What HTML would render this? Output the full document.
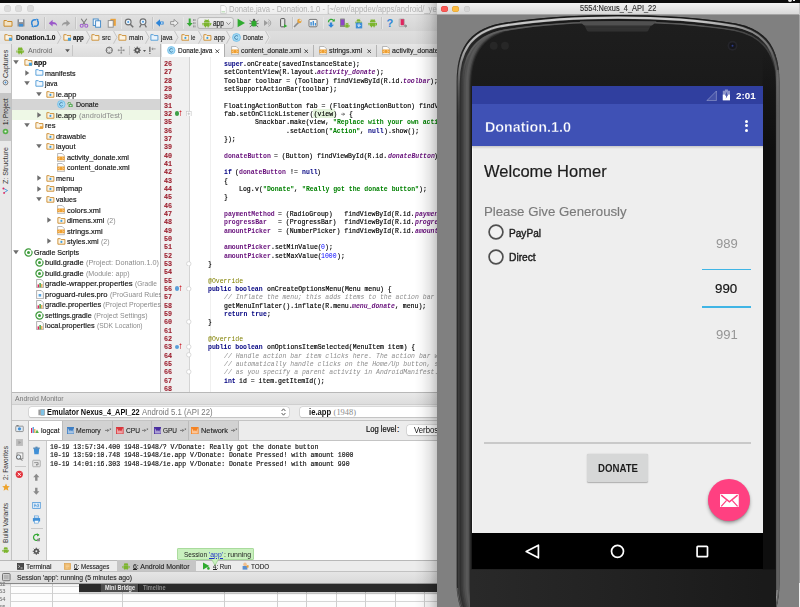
<!DOCTYPE html><html><head><meta charset="utf-8"><title>Donation</title><style>

html,body{margin:0;padding:0;background:#fff;}
#r{position:relative;width:800px;height:607px;overflow:hidden;background:#fff;font-family:"Liberation Sans",sans-serif;}
#r div,#r span,#r svg{position:absolute;}
#r .t{white-space:pre;transform-origin:0 50%;}
#r .c{position:static;}

</style></head><body><div id="r">
<div style="left:0px;top:0px;width:800px;height:607px;background:#fff;"></div>
<div style="left:0px;top:0px;width:800px;height:3px;background:#0c0c0c;"></div>
<div style="left:0px;top:3px;width:437px;height:11.6px;background:linear-gradient(#f7f7f7,#ececec);"></div>
<div style="left:4.0px;top:5.3px;width:7px;height:7px;border-radius:50%;background:#dcdcdc;box-shadow:inset 0 0 0 0.5px #cfcfcf"></div>
<div style="left:15.25px;top:5.3px;width:7px;height:7px;border-radius:50%;background:#dcdcdc;box-shadow:inset 0 0 0 0.5px #cfcfcf"></div>
<div style="left:26.5px;top:5.3px;width:7px;height:7px;border-radius:50%;background:#dcdcdc;box-shadow:inset 0 0 0 0.5px #cfcfcf"></div>
<svg style="left:219.5px;top:4.5px;" width="7" height="9" viewBox="0 0 7 9"><path d="M0.7,0.5h3.6l2,2v6h-5.6z" fill="#fafafa" stroke="#c4c4c4" stroke-width="0.7"/><path d="M1.5,6.8h3.5" stroke="#b5d8b0" stroke-width="1.2"/></svg>
<span class="t" style="left:229.40px;top:4.00px;font-size:8.7px;line-height:10.44px;color:#b2b2b2;transform:scaleX(0.884);">Donate.java - Donation.1.0 - [~/env/appdev/apps/android/_yea</span>
<div style="left:0px;top:14.6px;width:437px;height:16.4px;background:linear-gradient(#e0e0e0,#d5d5d5);"></div>
<div style="left:0px;top:14.4px;width:437px;height:0.6px;background:#cfcfcf;"></div>
<div style="left:0px;top:30.5px;width:437px;height:0.7px;background:#b9b9b9;"></div>
<div style="left:44px;top:17px;width:0.7px;height:12px;background:#c6c6c6;"></div>
<div style="left:44.7px;top:17px;width:0.6px;height:12px;background:#e6e6e6;"></div>
<div style="left:75.4px;top:17px;width:0.7px;height:12px;background:#c6c6c6;"></div>
<div style="left:76.10000000000001px;top:17px;width:0.6px;height:12px;background:#e6e6e6;"></div>
<div style="left:120.6px;top:17px;width:0.7px;height:12px;background:#c6c6c6;"></div>
<div style="left:121.3px;top:17px;width:0.6px;height:12px;background:#e6e6e6;"></div>
<div style="left:151.9px;top:17px;width:0.7px;height:12px;background:#c6c6c6;"></div>
<div style="left:152.6px;top:17px;width:0.6px;height:12px;background:#e6e6e6;"></div>
<div style="left:182.5px;top:17px;width:0.7px;height:12px;background:#c6c6c6;"></div>
<div style="left:183.2px;top:17px;width:0.6px;height:12px;background:#e6e6e6;"></div>
<div style="left:291.9px;top:17px;width:0.7px;height:12px;background:#c6c6c6;"></div>
<div style="left:292.59999999999997px;top:17px;width:0.6px;height:12px;background:#e6e6e6;"></div>
<div style="left:322.5px;top:17px;width:0.7px;height:12px;background:#c6c6c6;"></div>
<div style="left:323.2px;top:17px;width:0.6px;height:12px;background:#e6e6e6;"></div>
<div style="left:381.25px;top:17px;width:0.7px;height:12px;background:#c6c6c6;"></div>
<div style="left:381.95px;top:17px;width:0.6px;height:12px;background:#e6e6e6;"></div>
<svg style="left:2.75px;top:18.0px;" width="10" height="10" viewBox="0 0 10 10"><path d="M1,2.5h2.6l0.9,1h4.5v4.7h-8z" fill="#f3e3c4" stroke="#c98a2b" stroke-width="1"/></svg>
<svg style="left:16.25px;top:18.0px;" width="10" height="10" viewBox="0 0 10 10"><rect x="1.5" y="1.3" width="7" height="7.2" fill="#8a8f96"/><rect x="3" y="1.3" width="4" height="2.8" fill="#e9edf2"/><rect x="3" y="6" width="4" height="2.5" fill="#3f8fd6"/></svg>
<svg style="left:30.4px;top:18.0px;" width="10" height="10" viewBox="0 0 10 10"><circle cx="5" cy="5" r="3.3" fill="none" stroke="#2f86d8" stroke-width="1.5"/><path d="M7.6,0.8L2.4,9.2" stroke="#dcdcdc" stroke-width="1.1"/><path d="M6.2,0.6l2.4,0.6l-1.4,2z M3.8,9.4l-2.4,-0.6l1.4,-2z" fill="#2f86d8"/></svg>
<svg style="left:48.0px;top:18.0px;" width="10" height="10" viewBox="0 0 10 10"><path d="M0.8,5.2L4.6,1.8V4c3,0,4.4,1.2,4.6,4.2C8,6.4,6.6,6.2,4.6,6.3V8.6z" fill="#9b59c9"/></svg>
<svg style="left:61.25px;top:18.0px;" width="10" height="10" viewBox="0 0 10 10"><path d="M9.2,5.2L5.4,1.8V4c-3,0,-4.4,1.2,-4.6,4.2C2,6.4,3.4,6.2,5.4,6.3V8.6z" fill="#9a9a9a"/></svg>
<svg style="left:78.75px;top:18.0px;" width="10" height="10" viewBox="0 0 10 10"><path d="M2.2,0.8L6.6,7M7.8,0.8L3.4,7" stroke="#7a7a7a" stroke-width="1.1" fill="none"/><circle cx="2.7" cy="7.8" r="1.5" fill="none" stroke="#a35fd0" stroke-width="1.1"/><circle cx="7.3" cy="7.8" r="1.5" fill="none" stroke="#a35fd0" stroke-width="1.1"/></svg>
<svg style="left:91.9px;top:18.0px;" width="10" height="10" viewBox="0 0 10 10"><rect x="1.2" y="1" width="5" height="6.4" fill="#f4f8fc" stroke="#3d86c6" stroke-width="0.9"/><rect x="3.6" y="2.8" width="5" height="6.4" fill="#f4f8fc" stroke="#3d86c6" stroke-width="0.9"/></svg>
<svg style="left:106.9px;top:18.0px;" width="10" height="10" viewBox="0 0 10 10"><rect x="3.4" y="0.8" width="5.4" height="7" fill="#e9a13b"/><rect x="1.2" y="2.6" width="5" height="6.6" fill="#f6f6f6" stroke="#8a8a8a" stroke-width="0.9"/></svg>
<svg style="left:124.0px;top:18.0px;" width="10" height="10" viewBox="0 0 10 10"><circle cx="4.2" cy="4" r="2.9" fill="#eaf3fb" stroke="#6f6f6f" stroke-width="1.1"/><path d="M6.3,6.2L9.2,9.2" stroke="#6f6f6f" stroke-width="1.5"/><circle cx="4.2" cy="4" r="1" fill="#4a9be0"/></svg>
<svg style="left:137.5px;top:18.0px;" width="10" height="10" viewBox="0 0 10 10"><circle cx="5" cy="3.8" r="2.9" fill="#eaf3fb" stroke="#6f6f6f" stroke-width="1.1"/><path d="M3.4,6.2L1.6,9.4M6.6,6.2L8.4,9.4" stroke="#6f6f6f" stroke-width="1.2"/><circle cx="5" cy="3.8" r="1" fill="#4a9be0"/></svg>
<svg style="left:155.0px;top:18.0px;" width="10" height="10" viewBox="0 0 10 10"><path d="M0.8,5L5,1.2V3.4H8.6V6.6H5V8.8z" fill="#2f86d8"/><path d="M6,4.2h1.6v1.6h-1.6z" fill="#cfe4f7"/></svg>
<svg style="left:168.75px;top:18.0px;" width="10" height="10" viewBox="0 0 10 10"><path d="M9.2,5L5,1.4V3.6H1.6V6.4H5V8.6z" fill="#ececec" stroke="#8d8d8d" stroke-width="0.9"/></svg>
<svg style="left:186.25px;top:18.0px;" width="10" height="10" viewBox="0 0 10 10"><path d="M2.7,0.6v4.4h-2l3,3.6l3,-3.6h-2v-4.4z" fill="#33a933"/><path d="M7.6,1v2M9,1v2M7.6,4.2v2M9,4.2v2M7.6,7.4v2M9,7.4v2" stroke="#777" stroke-width="0.7"/></svg>
<svg style="left:197px;top:16.8px;" width="37" height="12.4" viewBox="0 0 37 12.4"><defs><linearGradient id="cbg" x1="0" y1="0" x2="0" y2="1"><stop offset="0" stop-color="#f2f2f2"/><stop offset="1" stop-color="#d9d9d9"/></linearGradient></defs><rect x="0.6" y="0.6" width="35.8" height="11" rx="2.4" fill="url(#cbg)" stroke="#a4a4a4" stroke-width="0.7"/></svg>
<svg style="left:202.1px;top:18.0px;" width="9.6" height="9.6" viewBox="0 0 10 10"><path d="M2,4.6a3,2.9 0 0 1 6,0z" fill="#7cb52e"/><rect x="2" y="5" width="6" height="3.6" rx="0.6" fill="#7cb52e"/><rect x="0.5" y="5" width="1.1" height="2.8" rx="0.5" fill="#7cb52e"/><rect x="8.4" y="5" width="1.1" height="2.8" rx="0.5" fill="#7cb52e"/><rect x="3" y="8" width="1.2" height="1.8" fill="#7cb52e"/><rect x="5.8" y="8" width="1.2" height="1.8" fill="#7cb52e"/><path d="M3,1.2l0.8,1.2M7,1.2l-0.8,1.2" stroke="#7cb52e" stroke-width="0.6"/></svg>
<span class="t" style="left:213.00px;top:19.00px;font-size:8.2px;line-height:9.84px;color:#1a1a1a;-webkit-text-stroke:0.15px #1a1a1a;transform:scaleX(0.790);">app</span>
<svg style="left:226.3px;top:21.6px;" width="5" height="3" viewBox="0 0 5 3"><path d="M0.4,0.3L2.5,2.6L4.6,0.3" fill="none" stroke="#7b7b7b" stroke-width="0.8"/></svg>
<svg style="left:235.6px;top:18.0px;" width="10" height="10" viewBox="0 0 10 10"><path d="M1.6,0.8L9,5L1.6,9.2z" fill="#2faa2f"/></svg>
<svg style="left:249.4px;top:18.0px;" width="10" height="10" viewBox="0 0 10 10"><ellipse cx="5" cy="5.4" rx="2.7" ry="3.2" fill="#2faa2f"/><path d="M0.6,2.4L3,4M9.4,2.4L7,4M0.4,5.6h2M9.6,5.6h-2M0.8,9L3,7.2M9.2,9L7,7.2" stroke="#555" stroke-width="0.8"/><circle cx="5" cy="2" r="1.2" fill="#555"/></svg>
<svg style="left:263.0px;top:18.0px;" width="10" height="10" viewBox="0 0 10 10"><path d="M1,2L5,5L1,8z" fill="#9c9c9c"/><path d="M5.4,1.6a3.6,3.6 0 0 1 0,6.8" fill="none" stroke="#a8a8a8" stroke-width="1"/><path d="M5,3.2a2,2 0 0 1 0,3.6" fill="none" stroke="#a8a8a8" stroke-width="0.9"/></svg>
<svg style="left:277.5px;top:18.0px;" width="10" height="10" viewBox="0 0 10 10"><rect x="2.6" y="0.6" width="4.2" height="8.2" rx="0.8" fill="#e4e4e4" stroke="#555" stroke-width="1"/><path d="M6,6.2L9.4,8L6,9.8z" fill="#2faa2f"/></svg>
<svg style="left:292.5px;top:18.0px;" width="10" height="10" viewBox="0 0 10 10"><path d="M1,9L5.6,4.4" stroke="#8a8a8a" stroke-width="1.5"/><circle cx="6.4" cy="3" r="2.2" fill="#e6a23a"/><circle cx="7.2" cy="2.2" r="1" fill="#dcdcdc"/></svg>
<svg style="left:308.0px;top:18.0px;" width="10" height="10" viewBox="0 0 10 10"><rect x="1" y="1.4" width="8" height="7.4" rx="1" fill="#f2f2f2" stroke="#6b6b6b" stroke-width="0.9"/><rect x="2.4" y="4" width="1.4" height="3.6" fill="#3f8fd6"/><rect x="4.6" y="3" width="1.4" height="4.6" fill="#3f8fd6"/><rect x="6.8" y="5" width="1.2" height="2.6" fill="#3f8fd6"/></svg>
<svg style="left:325.6px;top:18.0px;" width="10" height="10" viewBox="0 0 10 10"><path d="M3.8,4.4v2.4h-1.8l3,3l3,-3h-1.8v-2.4z" fill="#2f86d8"/><path d="M2.4,4.2a2.9,2.9 0 0 1 5.4,-1.4" fill="none" stroke="#33a933" stroke-width="1.3"/><path d="M8.8,0.8v2.8h-2.8z" fill="#33a933"/></svg>
<svg style="left:339.4px;top:18.0px;" width="10" height="10" viewBox="0 0 10 10"><rect x="1" y="0.6" width="5" height="8.4" rx="0.6" fill="#8a8a8a"/><rect x="1.8" y="1.6" width="3.4" height="5.6" fill="#8e44c7"/></svg>
<svg style="left:344.4px;top:22.2px;" width="6" height="6" viewBox="0 0 10 10"><path d="M2,4.6a3,2.9 0 0 1 6,0z" fill="#7cb52e"/><rect x="2" y="5" width="6" height="3.6" rx="0.6" fill="#7cb52e"/><rect x="0.5" y="5" width="1.1" height="2.8" rx="0.5" fill="#7cb52e"/><rect x="8.4" y="5" width="1.1" height="2.8" rx="0.5" fill="#7cb52e"/><rect x="3" y="8" width="1.2" height="1.8" fill="#7cb52e"/><rect x="5.8" y="8" width="1.2" height="1.8" fill="#7cb52e"/><path d="M3,1.2l0.8,1.2M7,1.2l-0.8,1.2" stroke="#7cb52e" stroke-width="0.6"/></svg>
<svg style="left:355.0px;top:17.9px;" width="7" height="7" viewBox="0 0 10 10"><path d="M2,4.6a3,2.9 0 0 1 6,0z" fill="#7cb52e"/><rect x="2" y="5" width="6" height="3.6" rx="0.6" fill="#7cb52e"/><rect x="0.5" y="5" width="1.1" height="2.8" rx="0.5" fill="#7cb52e"/><rect x="8.4" y="5" width="1.1" height="2.8" rx="0.5" fill="#7cb52e"/><rect x="3" y="8" width="1.2" height="1.8" fill="#7cb52e"/><rect x="5.8" y="8" width="1.2" height="1.8" fill="#7cb52e"/><path d="M3,1.2l0.8,1.2M7,1.2l-0.8,1.2" stroke="#7cb52e" stroke-width="0.6"/></svg>
<svg style="left:353.5px;top:19.6px;" width="10" height="10" viewBox="0 0 10 10"><rect x="1.8" y="2.6" width="6.4" height="5.8" fill="#3f8fd6"/><path d="M5,3.6v2.6m-1.6,-1.2l1.6,1.6l1.6,-1.6" stroke="#fff" stroke-width="0.9" fill="none"/></svg>
<svg style="left:367.75px;top:18.25px;" width="9.5" height="9.5" viewBox="0 0 10 10"><path d="M2,4.6a3,2.9 0 0 1 6,0z" fill="#7cb52e"/><rect x="2" y="5" width="6" height="3.6" rx="0.6" fill="#7cb52e"/><rect x="0.5" y="5" width="1.1" height="2.8" rx="0.5" fill="#7cb52e"/><rect x="8.4" y="5" width="1.1" height="2.8" rx="0.5" fill="#7cb52e"/><rect x="3" y="8" width="1.2" height="1.8" fill="#7cb52e"/><rect x="5.8" y="8" width="1.2" height="1.8" fill="#7cb52e"/><path d="M3,1.2l0.8,1.2M7,1.2l-0.8,1.2" stroke="#7cb52e" stroke-width="0.6"/></svg>
<span class="t" style="left:386.60px;top:17.00px;font-size:11px;line-height:13.20px;color:#2f86d8;font-weight:bold;">?</span>
<svg style="left:397.5px;top:18.0px;" width="10" height="10" viewBox="0 0 10 10"><rect x="2.6" y="1" width="3.6" height="6.2" rx="0.6" fill="#e0245e"/><rect x="1.2" y="1" width="5" height="7.6" rx="0.6" fill="none" stroke="#9a9a9a" stroke-width="0.6"/><circle cx="7.6" cy="8" r="0.9" fill="none" stroke="#444" stroke-width="0.6"/></svg>
<div style="left:0px;top:31.2px;width:437px;height:12.6px;background:linear-gradient(#dedede,#d8d8d8);"></div>
<div style="left:0px;top:31.2px;width:267px;height:12.4px;background:linear-gradient(#ececec,#e4e4e4);"></div>
<svg style="left:266.4px;top:31.2px;" width="6" height="12.6" viewBox="0 0 6 12.6"><path d="M0,0h1.2L4.6,6.3L1.2,12.6H0z" fill="#e8e8e8"/></svg>
<div style="left:0px;top:43.5px;width:437px;height:0.7px;background:#b4b4b4;"></div>
<svg style="left:4.35px;top:33.2px;" width="8.8" height="8.8" viewBox="0 0 10 10"><path d="M1,1.9h2.8l0.9,1h4.3v5.3h-8z" fill="#fbf3e3" stroke="#c98a2b" stroke-width="1"/><rect x="5.6" y="5.4" width="3.4" height="3.4" fill="#3f9fe0"/></svg>
<span class="t" style="left:15.60px;top:33.00px;font-size:8px;line-height:9.60px;color:#111;font-weight:bold;-webkit-text-stroke:0.15px #111;transform:scaleX(0.821);">Donation.1.0</span>
<svg style="left:56.5px;top:31.3px;" width="5" height="12.6" viewBox="0 0 5 12.6"><path d="M0.5,0L4,6.3L0.5,12.6" fill="none" stroke="#b5b5b5" stroke-width="0.7"/></svg>
<svg style="left:62.6px;top:33.2px;" width="8.8" height="8.8" viewBox="0 0 10 10"><path d="M1,1.9h2.8l0.9,1h4.3v5.3h-8z" fill="#fbf3e3" stroke="#c98a2b" stroke-width="1"/><rect x="5.6" y="5.4" width="3.4" height="3.4" fill="#3f9fe0"/></svg>
<span class="t" style="left:73.00px;top:33.00px;font-size:8px;line-height:9.60px;color:#111;font-weight:bold;-webkit-text-stroke:0.15px #111;transform:scaleX(0.759);">app</span>
<svg style="left:86.0px;top:31.3px;" width="5" height="12.6" viewBox="0 0 5 12.6"><path d="M0.5,0L4,6.3L0.5,12.6" fill="none" stroke="#b5b5b5" stroke-width="0.7"/></svg>
<svg style="left:91.19999999999999px;top:33.2px;" width="8.8" height="8.8" viewBox="0 0 10 10"><path d="M1,1.9h2.8l0.9,1h4.3v5.3h-8z" fill="#fbf3e3" stroke="#c98a2b" stroke-width="1"/></svg>
<span class="t" style="left:102.20px;top:33.00px;font-size:8px;line-height:9.60px;color:#222;-webkit-text-stroke:0.15px #222;transform:scaleX(0.815);">src</span>
<svg style="left:112.9px;top:31.3px;" width="5" height="12.6" viewBox="0 0 5 12.6"><path d="M0.5,0L4,6.3L0.5,12.6" fill="none" stroke="#b5b5b5" stroke-width="0.7"/></svg>
<svg style="left:118.1px;top:33.2px;" width="8.8" height="8.8" viewBox="0 0 10 10"><path d="M1,1.9h2.8l0.9,1h4.3v5.3h-8z" fill="#fbf3e3" stroke="#c98a2b" stroke-width="1"/></svg>
<span class="t" style="left:129.20px;top:33.00px;font-size:8px;line-height:9.60px;color:#222;-webkit-text-stroke:0.15px #222;transform:scaleX(0.807);">main</span>
<svg style="left:144.5px;top:31.3px;" width="5" height="12.6" viewBox="0 0 5 12.6"><path d="M0.5,0L4,6.3L0.5,12.6" fill="none" stroke="#b5b5b5" stroke-width="0.7"/></svg>
<svg style="left:150.35px;top:33.2px;" width="8.8" height="8.8" viewBox="0 0 10 10"><path d="M1,1.9h2.8l0.9,1h4.3v5.3h-8z" fill="#eaf4fc" stroke="#4a97d6" stroke-width="1"/></svg>
<span class="t" style="left:161.00px;top:33.00px;font-size:8px;line-height:9.60px;color:#222;-webkit-text-stroke:0.15px #222;transform:scaleX(0.783);">java</span>
<svg style="left:174.1px;top:31.3px;" width="5" height="12.6" viewBox="0 0 5 12.6"><path d="M0.5,0L4,6.3L0.5,12.6" fill="none" stroke="#b5b5b5" stroke-width="0.7"/></svg>
<svg style="left:180.6px;top:33.2px;" width="8.8" height="8.8" viewBox="0 0 10 10"><path d="M1,1.9h2.8l0.9,1h4.3v5.3h-8z" fill="#fbf3e3" stroke="#c98a2b" stroke-width="1"/><circle cx="5" cy="5.6" r="1.2" fill="#3f9fe0"/></svg>
<span class="t" style="left:191.25px;top:33.00px;font-size:8px;line-height:9.60px;color:#222;-webkit-text-stroke:0.15px #222;transform:scaleX(0.706);">ie</span>
<svg style="left:197.5px;top:31.3px;" width="5" height="12.6" viewBox="0 0 5 12.6"><path d="M0.5,0L4,6.3L0.5,12.6" fill="none" stroke="#b5b5b5" stroke-width="0.7"/></svg>
<svg style="left:202.85px;top:33.2px;" width="8.8" height="8.8" viewBox="0 0 10 10"><path d="M1,1.9h2.8l0.9,1h4.3v5.3h-8z" fill="#fbf3e3" stroke="#c98a2b" stroke-width="1"/><circle cx="5" cy="5.6" r="1.2" fill="#3f9fe0"/></svg>
<span class="t" style="left:213.50px;top:33.00px;font-size:8px;line-height:9.60px;color:#222;-webkit-text-stroke:0.15px #222;transform:scaleX(0.816);">app</span>
<svg style="left:226.0px;top:31.3px;" width="5" height="12.6" viewBox="0 0 5 12.6"><path d="M0.5,0L4,6.3L0.5,12.6" fill="none" stroke="#b5b5b5" stroke-width="0.7"/></svg>
<svg style="left:231.75px;top:33.1px;" width="9" height="9" viewBox="0 0 10 10"><circle cx="5" cy="5" r="4.4" fill="#a7dbf5" stroke="#58b3e6" stroke-width="0.7"/><path d="M6.6,3.6a2.1,2.1 0 1 0 0,2.8" fill="none" stroke="#2d6f9b" stroke-width="0.9"/></svg>
<span class="t" style="left:242.75px;top:33.00px;font-size:8px;line-height:9.60px;color:#222;-webkit-text-stroke:0.15px #222;transform:scaleX(0.787);">Donate</span>
<svg style="left:265.4px;top:31.3px;" width="5" height="12.6" viewBox="0 0 5 12.6"><path d="M0.5,0L4,6.3L0.5,12.6" fill="none" stroke="#b5b5b5" stroke-width="0.7"/></svg>
<div style="left:0px;top:44px;width:10.8px;height:516px;background:#e9e9e9;"></div>
<div style="left:10.8px;top:44px;width:0.8px;height:516px;background:#c2c2c2;"></div>
<div style="left:0px;top:92.6px;width:10.8px;height:48.6px;background:#c6c6c6;"></div>
<span class="t" style="left:1.90px;top:77.60px;font-size:7.2px;line-height:8.64px;color:#333;transform-origin:0 0;transform:rotate(-90deg) scaleX(0.967);">Captures</span>
<svg style="left:2.0999999999999996px;top:78.9px;" width="7" height="7" viewBox="0 0 10 10"><circle cx="5" cy="5" r="3.4" fill="none" stroke="#555" stroke-width="1"/><circle cx="5" cy="5" r="1.3" fill="#3f8fd6"/></svg>
<span class="t" style="left:1.90px;top:124.60px;font-size:7.2px;line-height:8.64px;color:#111;transform-origin:0 0;transform:rotate(-90deg) scaleX(0.876);">1: Project</span>
<svg style="left:2.0999999999999996px;top:128.3px;" width="7" height="7" viewBox="0 0 10 10"><circle cx="5" cy="5" r="4" fill="#58b04a"/><circle cx="5" cy="5" r="1.6" fill="#e7f4e4"/></svg>
<span class="t" style="left:1.90px;top:183.60px;font-size:7.2px;line-height:8.64px;color:#333;transform-origin:0 0;transform:rotate(-90deg) scaleX(0.985);">Z: Structure</span>
<svg style="left:2.0999999999999996px;top:186.7px;" width="7" height="7" viewBox="0 0 10 10"><path d="M2,2L8,5L3,8" stroke="#3f8fd6" stroke-width="1.2" fill="none"/><circle cx="2" cy="2" r="1.4" fill="#e0245e"/><circle cx="3" cy="8.4" r="1.4" fill="#e0245e"/></svg>
<span class="t" style="left:1.90px;top:480.00px;font-size:7.2px;line-height:8.64px;color:#333;transform-origin:0 0;transform:rotate(-90deg) scaleX(0.905);">2: Favorites</span>
<svg style="left:1.6px;top:482.6px;" width="8" height="8" viewBox="0 0 8 8"><path d="M4,0.4L5.1,2.9L7.8,3.2L5.8,5L6.4,7.7L4,6.3L1.6,7.7L2.2,5L0.2,3.2L2.9,2.9z" fill="#eda32c"/></svg>
<span class="t" style="left:1.90px;top:543.00px;font-size:7.2px;line-height:8.64px;color:#333;transform-origin:0 0;transform:rotate(-90deg) scaleX(0.913);">Build Variants</span>
<svg style="left:1.8499999999999996px;top:545.65px;" width="7.5" height="7.5" viewBox="0 0 10 10"><path d="M2,4.6a3,2.9 0 0 1 6,0z" fill="#7cb52e"/><rect x="2" y="5" width="6" height="3.6" rx="0.6" fill="#7cb52e"/><rect x="0.5" y="5" width="1.1" height="2.8" rx="0.5" fill="#7cb52e"/><rect x="8.4" y="5" width="1.1" height="2.8" rx="0.5" fill="#7cb52e"/><rect x="3" y="8" width="1.2" height="1.8" fill="#7cb52e"/><rect x="5.8" y="8" width="1.2" height="1.8" fill="#7cb52e"/><path d="M3,1.2l0.8,1.2M7,1.2l-0.8,1.2" stroke="#7cb52e" stroke-width="0.6"/></svg>
<div style="left:11.6px;top:44px;width:149px;height:13px;background:linear-gradient(#e8e8e8,#dcdcdc);"></div>
<div style="left:11.6px;top:56.6px;width:149px;height:0.6px;background:#bdbdbd;"></div>
<svg style="left:16.45px;top:46.25px;" width="8.5" height="8.5" viewBox="0 0 10 10"><path d="M2,4.6a3,2.9 0 0 1 6,0z" fill="#7cb52e"/><rect x="2" y="5" width="6" height="3.6" rx="0.6" fill="#7cb52e"/><rect x="0.5" y="5" width="1.1" height="2.8" rx="0.5" fill="#7cb52e"/><rect x="8.4" y="5" width="1.1" height="2.8" rx="0.5" fill="#7cb52e"/><rect x="3" y="8" width="1.2" height="1.8" fill="#7cb52e"/><rect x="5.8" y="8" width="1.2" height="1.8" fill="#7cb52e"/><path d="M3,1.2l0.8,1.2M7,1.2l-0.8,1.2" stroke="#7cb52e" stroke-width="0.6"/></svg>
<span class="t" style="left:27.50px;top:46.00px;font-size:8px;line-height:9.60px;color:#6a6a6a;transform:scaleX(0.888);">Android</span>
<svg style="left:65px;top:49.2px;" width="5" height="3.4" viewBox="0 0 5 3.4"><path d="M0.2,0.3h4.6L2.5,3.2z" fill="#555"/></svg>
<div style="left:72.3px;top:45px;width:0.6px;height:11px;background:#c6c6c6;"></div>
<svg style="left:105.25px;top:46.25px;" width="8.5" height="8.5" viewBox="0 0 10 10"><circle cx="5" cy="5" r="3.7" fill="none" stroke="#666" stroke-width="1.1"/><path d="M5,1.3v7.4M1.3,5h7.4" stroke="#666" stroke-width="0.8"/><circle cx="5" cy="5" r="1.7" fill="#e4e4e4"/></svg>
<svg style="left:116.75px;top:46.25px;" width="8.5" height="8.5" viewBox="0 0 10 10"><path d="M5,0.8v8.4M0.8,5h8.4" stroke="#8a8a8a" stroke-width="0.8"/><path d="M5,3.2l-1.4,-1.6h2.8zM5,6.8l-1.4,1.6h2.8zM3.2,5l-1.6,-1.4v2.8zM6.8,5l1.6,-1.4v2.8z" fill="#8a8a8a"/></svg>
<div style="left:129.3px;top:46px;width:0.6px;height:9px;background:#c6c6c6;"></div>
<svg style="left:132.95px;top:46.25px;" width="8.5" height="8.5" viewBox="0 0 10 10"><circle cx="5" cy="5" r="2.4" fill="none" stroke="#555" stroke-width="1.6"/><path d="M5,0.6v8.8M0.6,5h8.8M1.9,1.9l6.2,6.2M8.1,1.9l-6.2,6.2" stroke="#555" stroke-width="1"/><circle cx="5" cy="5" r="1.2" fill="#e2e2e2"/></svg>
<svg style="left:142.5px;top:50.3px;" width="3" height="2" viewBox="0 0 3 2"><path d="M0,0h3L1.5,2z" fill="#555"/></svg>
<svg style="left:148.35px;top:46.25px;" width="8.5" height="8.5" viewBox="0 0 10 10"><path d="M2.2,1v6" stroke="#555" stroke-width="1.3"/><path d="M2.2,8.2v1.2" stroke="#555" stroke-width="1.3"/><path d="M9,3.4H4.6M6,2L4.4,3.4L6,4.8" stroke="#777" stroke-width="0.8" fill="none"/></svg>
<div style="left:11.6px;top:57.2px;width:149px;height:335px;background:#fff;"></div>
<div style="left:160.4px;top:44px;width:0.8px;height:348px;background:#b8b8b8;"></div>
<div style="left:11.6px;top:99.19px;width:148.8px;height:10.54px;background:#d5d5d5;"></div>
<div style="left:11.6px;top:109.73px;width:148.8px;height:10.54px;background:#eef8e6;"></div>
<svg style="left:13px;top:60.099999999999994px;" width="6" height="4.6" viewBox="0 0 6 4.6"><path d="M0.2,0.3h5.6L3,4.3z" fill="#6e6e6e"/></svg>
<svg style="left:24.1px;top:57.9px;" width="8.8" height="8.8" viewBox="0 0 10 10"><path d="M1,1.9h2.8l0.9,1h4.3v5.3h-8z" fill="#fbf3e3" stroke="#c98a2b" stroke-width="1"/><rect x="5.6" y="5.4" width="3.4" height="3.4" fill="#3f9fe0"/></svg>
<span class="t" style="left:33.80px;top:58.00px;font-size:8.1px;line-height:9.72px;color:#111;font-weight:bold;-webkit-text-stroke:0.16px #111;transform:scaleX(0.876);">app</span>
<svg style="left:25px;top:69.84px;" width="4.6" height="6" viewBox="0 0 4.6 6"><path d="M0.3,0.2v5.6L4.3,3z" fill="#6e6e6e"/></svg>
<svg style="left:35.1px;top:68.44px;" width="8.8" height="8.8" viewBox="0 0 10 10"><path d="M1,1.9h2.8l0.9,1h4.3v5.3h-8z" fill="#f3f9fe" stroke="#4a97d6" stroke-width="1"/></svg>
<span class="t" style="left:44.80px;top:69.00px;font-size:8.1px;line-height:9.72px;color:#111;-webkit-text-stroke:0.16px #111;transform:scaleX(0.883);">manifests</span>
<svg style="left:24px;top:81.17999999999999px;" width="6" height="4.6" viewBox="0 0 6 4.6"><path d="M0.2,0.3h5.6L3,4.3z" fill="#6e6e6e"/></svg>
<svg style="left:35.1px;top:78.97999999999999px;" width="8.8" height="8.8" viewBox="0 0 10 10"><path d="M1,1.9h2.8l0.9,1h4.3v5.3h-8z" fill="#f3f9fe" stroke="#4a97d6" stroke-width="1"/></svg>
<span class="t" style="left:44.80px;top:79.00px;font-size:8.1px;line-height:9.72px;color:#111;-webkit-text-stroke:0.16px #111;transform:scaleX(0.834);">java</span>
<svg style="left:35.5px;top:91.71999999999998px;" width="6" height="4.6" viewBox="0 0 6 4.6"><path d="M0.2,0.3h5.6L3,4.3z" fill="#6e6e6e"/></svg>
<svg style="left:46.1px;top:89.51999999999998px;" width="8.8" height="8.8" viewBox="0 0 10 10"><path d="M1,1.9h2.8l0.9,1h4.3v5.3h-8z" fill="#fbf3e3" stroke="#c98a2b" stroke-width="1"/><circle cx="5" cy="5.6" r="1.2" fill="#3f9fe0"/></svg>
<span class="t" style="left:55.80px;top:90.00px;font-size:8.1px;line-height:9.72px;color:#111;-webkit-text-stroke:0.16px #111;transform:scaleX(0.925);">ie.app</span>
<svg style="left:57.1px;top:100.16px;" width="8.6" height="8.6" viewBox="0 0 10 10"><circle cx="5" cy="5" r="4.4" fill="#a7dbf5" stroke="#58b3e6" stroke-width="0.7"/><path d="M6.6,3.6a2.1,2.1 0 1 0 0,2.8" fill="none" stroke="#2d6f9b" stroke-width="0.9"/></svg>
<svg style="left:67px;top:101.86px;" width="6" height="5.6" viewBox="0 0 6 5.6"><path d="M0.8,2.4v-0.6a1.5,1.5 0 0 1 3,0" fill="none" stroke="#3d9a3a" stroke-width="0.8"/><rect x="1.6" y="2.2" width="4" height="3" rx="0.5" fill="#3d9a3a"/><rect x="2.6" y="3" width="2" height="1.4" fill="#d6f0d2"/></svg>
<span class="t" style="left:76.20px;top:100.00px;font-size:8.1px;line-height:9.72px;color:#111;-webkit-text-stroke:0.15px #111;transform:scaleX(0.866);">Donate</span>
<svg style="left:36.5px;top:112.0px;" width="4.6" height="6" viewBox="0 0 4.6 6"><path d="M0.3,0.2v5.6L4.3,3z" fill="#6e6e6e"/></svg>
<svg style="left:46.1px;top:110.6px;" width="8.8" height="8.8" viewBox="0 0 10 10"><path d="M1,1.9h2.8l0.9,1h4.3v5.3h-8z" fill="#fbf3e3" stroke="#c98a2b" stroke-width="1"/><circle cx="5" cy="5.6" r="1.2" fill="#3f9fe0"/></svg>
<span class="t" style="left:55.80px;top:111.00px;font-size:8.1px;line-height:9.72px;color:#111;-webkit-text-stroke:0.16px #111;transform:scaleX(0.925);">ie.app</span>
<span class="t" style="left:78.60px;top:111.00px;font-size:8.1px;line-height:9.72px;color:#8b8b8b;transform:scaleX(0.919);">(androidTest)</span>
<svg style="left:24px;top:123.33999999999999px;" width="6" height="4.6" viewBox="0 0 6 4.6"><path d="M0.2,0.3h5.6L3,4.3z" fill="#6e6e6e"/></svg>
<svg style="left:35.1px;top:121.13999999999999px;" width="8.8" height="8.8" viewBox="0 0 10 10"><path d="M1,1.9h2.8l0.9,1h4.3v5.3h-8z" fill="#fbf3e3" stroke="#c98a2b" stroke-width="1"/><path d="M5.6,6h3.4v2.8h-3.4z" fill="#e9a13b"/></svg>
<span class="t" style="left:44.80px;top:121.00px;font-size:8.1px;line-height:9.72px;color:#111;-webkit-text-stroke:0.16px #111;transform:scaleX(0.942);">res</span>
<svg style="left:46.1px;top:131.67999999999998px;" width="8.8" height="8.8" viewBox="0 0 10 10"><path d="M1,1.9h2.8l0.9,1h4.3v5.3h-8z" fill="#fbf3e3" stroke="#c98a2b" stroke-width="1"/><circle cx="5" cy="5.6" r="1.2" fill="#3f9fe0"/></svg>
<span class="t" style="left:55.80px;top:132.00px;font-size:8.1px;line-height:9.72px;color:#111;-webkit-text-stroke:0.16px #111;transform:scaleX(0.913);">drawable</span>
<svg style="left:35.5px;top:144.42000000000002px;" width="6" height="4.6" viewBox="0 0 6 4.6"><path d="M0.2,0.3h5.6L3,4.3z" fill="#6e6e6e"/></svg>
<svg style="left:46.1px;top:142.22px;" width="8.8" height="8.8" viewBox="0 0 10 10"><path d="M1,1.9h2.8l0.9,1h4.3v5.3h-8z" fill="#fbf3e3" stroke="#c98a2b" stroke-width="1"/><circle cx="5" cy="5.6" r="1.2" fill="#3f9fe0"/></svg>
<span class="t" style="left:55.80px;top:142.00px;font-size:8.1px;line-height:9.72px;color:#111;-webkit-text-stroke:0.16px #111;transform:scaleX(0.898);">layout</span>
<svg style="left:57.4px;top:152.55999999999997px;" width="8" height="9.2" viewBox="0 0 8 9.2"><path d="M0.6,0.5h4.6l2.2,2.2v6h-6.8z" fill="#fdfdfd" stroke="#9b9b9b" stroke-width="0.7"/><rect x="0.3" y="3.6" width="7.4" height="3.6" rx="0.6" fill="#f0a030"/><path d="M2.6,4.6l-1,0.8l1,0.8M5.4,4.6l1,0.8l-1,0.8" stroke="#fff" stroke-width="0.6" fill="none"/></svg>
<span class="t" style="left:66.80px;top:153.00px;font-size:8.1px;line-height:9.72px;color:#111;-webkit-text-stroke:0.16px #111;transform:scaleX(0.899);">activity_donate.xml</span>
<svg style="left:57.4px;top:163.1px;" width="8" height="9.2" viewBox="0 0 8 9.2"><path d="M0.6,0.5h4.6l2.2,2.2v6h-6.8z" fill="#fdfdfd" stroke="#9b9b9b" stroke-width="0.7"/><rect x="0.3" y="3.6" width="7.4" height="3.6" rx="0.6" fill="#f0a030"/><path d="M2.6,4.6l-1,0.8l1,0.8M5.4,4.6l1,0.8l-1,0.8" stroke="#fff" stroke-width="0.6" fill="none"/></svg>
<span class="t" style="left:66.80px;top:163.00px;font-size:8.1px;line-height:9.72px;color:#111;-webkit-text-stroke:0.16px #111;transform:scaleX(0.885);">content_donate.xml</span>
<svg style="left:36.5px;top:175.24px;" width="4.6" height="6" viewBox="0 0 4.6 6"><path d="M0.3,0.2v5.6L4.3,3z" fill="#6e6e6e"/></svg>
<svg style="left:46.1px;top:173.84px;" width="8.8" height="8.8" viewBox="0 0 10 10"><path d="M1,1.9h2.8l0.9,1h4.3v5.3h-8z" fill="#fbf3e3" stroke="#c98a2b" stroke-width="1"/><circle cx="5" cy="5.6" r="1.2" fill="#3f9fe0"/></svg>
<span class="t" style="left:55.80px;top:174.00px;font-size:8.1px;line-height:9.72px;color:#111;-webkit-text-stroke:0.16px #111;transform:scaleX(0.904);">menu</span>
<svg style="left:36.5px;top:185.77999999999997px;" width="4.6" height="6" viewBox="0 0 4.6 6"><path d="M0.3,0.2v5.6L4.3,3z" fill="#6e6e6e"/></svg>
<svg style="left:46.1px;top:184.37999999999997px;" width="8.8" height="8.8" viewBox="0 0 10 10"><path d="M1,1.9h2.8l0.9,1h4.3v5.3h-8z" fill="#fbf3e3" stroke="#c98a2b" stroke-width="1"/><circle cx="5" cy="5.6" r="1.2" fill="#3f9fe0"/></svg>
<span class="t" style="left:55.80px;top:184.00px;font-size:8.1px;line-height:9.72px;color:#111;-webkit-text-stroke:0.16px #111;transform:scaleX(0.917);">mipmap</span>
<svg style="left:35.5px;top:197.12px;" width="6" height="4.6" viewBox="0 0 6 4.6"><path d="M0.2,0.3h5.6L3,4.3z" fill="#6e6e6e"/></svg>
<svg style="left:46.1px;top:194.92px;" width="8.8" height="8.8" viewBox="0 0 10 10"><path d="M1,1.9h2.8l0.9,1h4.3v5.3h-8z" fill="#fbf3e3" stroke="#c98a2b" stroke-width="1"/><circle cx="5" cy="5.6" r="1.2" fill="#3f9fe0"/></svg>
<span class="t" style="left:55.80px;top:195.00px;font-size:8.1px;line-height:9.72px;color:#111;-webkit-text-stroke:0.16px #111;transform:scaleX(0.880);">values</span>
<svg style="left:57.4px;top:205.26000000000002px;" width="8" height="9.2" viewBox="0 0 8 9.2"><path d="M0.6,0.5h4.6l2.2,2.2v6h-6.8z" fill="#fdfdfd" stroke="#9b9b9b" stroke-width="0.7"/><rect x="0.3" y="3.6" width="7.4" height="3.6" rx="0.6" fill="#f0a030"/><path d="M2.6,4.6l-1,0.8l1,0.8M5.4,4.6l1,0.8l-1,0.8" stroke="#fff" stroke-width="0.6" fill="none"/></svg>
<span class="t" style="left:66.80px;top:206.00px;font-size:8.1px;line-height:9.72px;color:#111;-webkit-text-stroke:0.16px #111;transform:scaleX(0.922);">colors.xml</span>
<svg style="left:47px;top:217.39999999999998px;" width="4.6" height="6" viewBox="0 0 4.6 6"><path d="M0.3,0.2v5.6L4.3,3z" fill="#6e6e6e"/></svg>
<svg style="left:57.0px;top:215.99999999999997px;" width="8.8" height="8.8" viewBox="0 0 10 10"><path d="M1,1.9h2.8l0.9,1h4.3v5.3h-8z" fill="#fbf3e3" stroke="#c98a2b" stroke-width="1"/><circle cx="5" cy="5.6" r="1.2" fill="#3f9fe0"/></svg>
<span class="t" style="left:66.80px;top:216.00px;font-size:8.1px;line-height:9.72px;color:#111;-webkit-text-stroke:0.16px #111;transform:scaleX(0.914);">dimens.xml</span>
<span class="t" style="left:106.60px;top:216.00px;font-size:8.1px;line-height:9.72px;color:#8b8b8b;transform:scaleX(0.868);">(2)</span>
<svg style="left:57.4px;top:226.34px;" width="8" height="9.2" viewBox="0 0 8 9.2"><path d="M0.6,0.5h4.6l2.2,2.2v6h-6.8z" fill="#fdfdfd" stroke="#9b9b9b" stroke-width="0.7"/><rect x="0.3" y="3.6" width="7.4" height="3.6" rx="0.6" fill="#f0a030"/><path d="M2.6,4.6l-1,0.8l1,0.8M5.4,4.6l1,0.8l-1,0.8" stroke="#fff" stroke-width="0.6" fill="none"/></svg>
<span class="t" style="left:66.80px;top:227.00px;font-size:8.1px;line-height:9.72px;color:#111;-webkit-text-stroke:0.16px #111;transform:scaleX(0.920);">strings.xml</span>
<svg style="left:47px;top:238.47999999999996px;" width="4.6" height="6" viewBox="0 0 4.6 6"><path d="M0.3,0.2v5.6L4.3,3z" fill="#6e6e6e"/></svg>
<svg style="left:57.0px;top:237.07999999999996px;" width="8.8" height="8.8" viewBox="0 0 10 10"><path d="M1,1.9h2.8l0.9,1h4.3v5.3h-8z" fill="#fbf3e3" stroke="#c98a2b" stroke-width="1"/><circle cx="5" cy="5.6" r="1.2" fill="#3f9fe0"/></svg>
<span class="t" style="left:66.80px;top:237.00px;font-size:8.1px;line-height:9.72px;color:#111;-webkit-text-stroke:0.16px #111;transform:scaleX(0.889);">styles.xml</span>
<span class="t" style="left:100.80px;top:237.00px;font-size:8.1px;line-height:9.72px;color:#8b8b8b;transform:scaleX(0.868);">(2)</span>
<svg style="left:13px;top:249.82px;" width="6" height="4.6" viewBox="0 0 6 4.6"><path d="M0.2,0.3h5.6L3,4.3z" fill="#6e6e6e"/></svg>
<svg style="left:24.0px;top:247.51999999999998px;" width="9" height="9" viewBox="0 0 9 9"><circle cx="4.5" cy="4.5" r="3.6" fill="#fff" stroke="#3d9a3a" stroke-width="1.2"/><circle cx="4.5" cy="4.5" r="1.5" fill="#3d9a3a"/><path d="M7,1.2l1.6,1.6" stroke="#fff" stroke-width="1.2"/></svg>
<span class="t" style="left:33.80px;top:248.00px;font-size:8.1px;line-height:9.72px;color:#111;-webkit-text-stroke:0.16px #111;transform:scaleX(0.878);">Gradle Scripts</span>
<svg style="left:35.0px;top:258.06px;" width="9" height="9" viewBox="0 0 9 9"><circle cx="4.5" cy="4.5" r="3.6" fill="#fff" stroke="#3d9a3a" stroke-width="1.2"/><circle cx="4.5" cy="4.5" r="1.5" fill="#3d9a3a"/><path d="M7,1.2l1.6,1.6" stroke="#fff" stroke-width="1.2"/></svg>
<span class="t" style="left:44.80px;top:258.00px;font-size:8.1px;line-height:9.72px;color:#111;-webkit-text-stroke:0.16px #111;transform:scaleX(0.922);">build.gradle</span>
<span class="t" style="left:85.80px;top:258.00px;font-size:8.1px;line-height:9.72px;color:#8b8b8b;transform:scaleX(0.901);">(Project: Donation.1.0)</span>
<svg style="left:35.0px;top:268.59999999999997px;" width="9" height="9" viewBox="0 0 9 9"><circle cx="4.5" cy="4.5" r="3.6" fill="#fff" stroke="#3d9a3a" stroke-width="1.2"/><circle cx="4.5" cy="4.5" r="1.5" fill="#3d9a3a"/><path d="M7,1.2l1.6,1.6" stroke="#fff" stroke-width="1.2"/></svg>
<span class="t" style="left:44.80px;top:269.00px;font-size:8.1px;line-height:9.72px;color:#111;-webkit-text-stroke:0.16px #111;transform:scaleX(0.922);">build.gradle</span>
<span class="t" style="left:85.80px;top:269.00px;font-size:8.1px;line-height:9.72px;color:#8b8b8b;transform:scaleX(0.873);">(Module: app)</span>
<svg style="left:35.5px;top:279.03999999999996px;" width="8" height="9.2" viewBox="0 0 8 9.2"><path d="M0.6,0.5h4.6l2.2,2.2v6h-6.8z" fill="#fdfdfd" stroke="#8f8f8f" stroke-width="0.7"/><rect x="1.6" y="5.4" width="1.4" height="3" fill="#e0245e"/><rect x="3.4" y="4" width="1.4" height="4.4" fill="#3d9a3a"/><rect x="5.2" y="5" width="1.2" height="3.4" fill="#e9a13b"/></svg>
<span class="t" style="left:44.80px;top:279.00px;font-size:8.1px;line-height:9.72px;color:#111;-webkit-text-stroke:0.16px #111;transform:scaleX(0.951);">gradle-wrapper.properties</span>
<span class="t" style="left:134.90px;top:279.00px;font-size:8.1px;line-height:9.72px;color:#8b8b8b;transform:scaleX(0.815);">(Gradle</span>
<svg style="left:35.5px;top:289.58px;" width="8" height="9.2" viewBox="0 0 8 9.2"><path d="M0.6,0.5h4.6l2.2,2.2v6h-6.8z" fill="#fdfdfd" stroke="#8f8f8f" stroke-width="0.7"/><rect x="2.6" y="4" width="2.6" height="2.6" fill="#5aa5e0"/></svg>
<span class="t" style="left:44.80px;top:290.00px;font-size:8.1px;line-height:9.72px;color:#111;-webkit-text-stroke:0.16px #111;transform:scaleX(0.940);">proguard-rules.pro</span>
<span class="t" style="left:109.80px;top:290.00px;font-size:8.1px;line-height:9.72px;color:#8b8b8b;transform:scaleX(0.856);">(ProGuard Rules</span>
<svg style="left:35.5px;top:300.11999999999995px;" width="8" height="9.2" viewBox="0 0 8 9.2"><path d="M0.6,0.5h4.6l2.2,2.2v6h-6.8z" fill="#fdfdfd" stroke="#8f8f8f" stroke-width="0.7"/><rect x="1.6" y="5.4" width="1.4" height="3" fill="#e0245e"/><rect x="3.4" y="4" width="1.4" height="4.4" fill="#3d9a3a"/><rect x="5.2" y="5" width="1.2" height="3.4" fill="#e9a13b"/></svg>
<span class="t" style="left:44.80px;top:300.00px;font-size:8.1px;line-height:9.72px;color:#111;-webkit-text-stroke:0.16px #111;transform:scaleX(0.925);">gradle.properties</span>
<span class="t" style="left:103.40px;top:300.00px;font-size:8.1px;line-height:9.72px;color:#8b8b8b;transform:scaleX(0.865);">(Project Properties</span>
<svg style="left:35.0px;top:310.76px;" width="9" height="9" viewBox="0 0 9 9"><circle cx="4.5" cy="4.5" r="3.6" fill="#fff" stroke="#3d9a3a" stroke-width="1.2"/><circle cx="4.5" cy="4.5" r="1.5" fill="#3d9a3a"/><path d="M7,1.2l1.6,1.6" stroke="#fff" stroke-width="1.2"/></svg>
<span class="t" style="left:44.80px;top:311.00px;font-size:8.1px;line-height:9.72px;color:#111;-webkit-text-stroke:0.16px #111;transform:scaleX(0.887);">settings.gradle</span>
<span class="t" style="left:93.90px;top:311.00px;font-size:8.1px;line-height:9.72px;color:#8b8b8b;transform:scaleX(0.863);">(Project Settings)</span>
<svg style="left:35.5px;top:321.2px;" width="8" height="9.2" viewBox="0 0 8 9.2"><path d="M0.6,0.5h4.6l2.2,2.2v6h-6.8z" fill="#fdfdfd" stroke="#8f8f8f" stroke-width="0.7"/><rect x="1.6" y="5.4" width="1.4" height="3" fill="#e0245e"/><rect x="3.4" y="4" width="1.4" height="4.4" fill="#3d9a3a"/><rect x="5.2" y="5" width="1.2" height="3.4" fill="#e9a13b"/></svg>
<span class="t" style="left:44.80px;top:321.00px;font-size:8.1px;line-height:9.72px;color:#111;-webkit-text-stroke:0.16px #111;transform:scaleX(0.904);">local.properties</span>
<span class="t" style="left:96.80px;top:321.00px;font-size:8.1px;line-height:9.72px;color:#8b8b8b;transform:scaleX(0.831);">(SDK Location)</span>
<div style="left:161.2px;top:44px;width:276px;height:13.2px;background:linear-gradient(#e6e6e6,#dcdcdc);"></div>
<div style="left:161.2px;top:56.6px;width:276px;height:0.7px;background:#b4b4b4;"></div>
<div style="left:161.6px;top:44.3px;width:62.2px;height:13px;background:#ffffff;"></div>
<div style="left:223.8px;top:44.3px;width:0.7px;height:12.4px;background:#aeaeae;"></div>
<div style="left:312.5px;top:45px;width:0.7px;height:11.6px;background:#b4b4b4;"></div>
<div style="left:375.6px;top:45px;width:0.7px;height:11.6px;background:#b4b4b4;"></div>
<svg style="left:166.95px;top:46.300000000000004px;" width="8.6" height="8.6" viewBox="0 0 10 10"><circle cx="5" cy="5" r="4.4" fill="#a7dbf5" stroke="#58b3e6" stroke-width="0.7"/><path d="M6.6,3.6a2.1,2.1 0 1 0 0,2.8" fill="none" stroke="#2d6f9b" stroke-width="0.9"/></svg>
<span class="t" style="left:177.50px;top:46.00px;font-size:8.1px;line-height:9.72px;color:#111;-webkit-text-stroke:0.15px #111;transform:scaleX(0.796);">Donate.java</span>
<svg style="left:215.39999999999998px;top:48.6px;" width="4.6" height="4.6" viewBox="0 0 4.6 4.6"><path d="M0.4,0.4L4.2,4.2M4.2,0.4L0.4,4.2" stroke="#333" stroke-width="0.85"/></svg>
<svg style="left:230.6px;top:46.0px;" width="8" height="9.2" viewBox="0 0 8 9.2"><path d="M0.6,0.5h4.6l2.2,2.2v6h-6.8z" fill="#fdfdfd" stroke="#9b9b9b" stroke-width="0.7"/><rect x="0.3" y="3.6" width="7.4" height="3.6" rx="0.6" fill="#f0a030"/><path d="M2.6,4.6l-1,0.8l1,0.8M5.4,4.6l1,0.8l-1,0.8" stroke="#fff" stroke-width="0.6" fill="none"/></svg>
<span class="t" style="left:241.00px;top:46.00px;font-size:8.1px;line-height:9.72px;color:#222;-webkit-text-stroke:0.15px #222;transform:scaleX(0.849);">content_donate.xml</span>
<svg style="left:303.7px;top:48.6px;" width="4.6" height="4.6" viewBox="0 0 4.6 4.6"><path d="M0.4,0.4L4.2,4.2M4.2,0.4L0.4,4.2" stroke="#333" stroke-width="0.85"/></svg>
<svg style="left:319px;top:46.0px;" width="8" height="9.2" viewBox="0 0 8 9.2"><path d="M0.6,0.5h4.6l2.2,2.2v6h-6.8z" fill="#fdfdfd" stroke="#9b9b9b" stroke-width="0.7"/><rect x="0.3" y="3.6" width="7.4" height="3.6" rx="0.6" fill="#f0a030"/><path d="M2.6,4.6l-1,0.8l1,0.8M5.4,4.6l1,0.8l-1,0.8" stroke="#fff" stroke-width="0.6" fill="none"/></svg>
<span class="t" style="left:329.40px;top:46.00px;font-size:8.1px;line-height:9.72px;color:#222;-webkit-text-stroke:0.15px #222;transform:scaleX(0.858);">strings.xml</span>
<svg style="left:366.7px;top:48.6px;" width="4.6" height="4.6" viewBox="0 0 4.6 4.6"><path d="M0.4,0.4L4.2,4.2M4.2,0.4L0.4,4.2" stroke="#333" stroke-width="0.85"/></svg>
<svg style="left:381.6px;top:46.0px;" width="8" height="9.2" viewBox="0 0 8 9.2"><path d="M0.6,0.5h4.6l2.2,2.2v6h-6.8z" fill="#fdfdfd" stroke="#9b9b9b" stroke-width="0.7"/><rect x="0.3" y="3.6" width="7.4" height="3.6" rx="0.6" fill="#f0a030"/><path d="M2.6,4.6l-1,0.8l1,0.8M5.4,4.6l1,0.8l-1,0.8" stroke="#fff" stroke-width="0.6" fill="none"/></svg>
<span class="t" style="left:392.00px;top:46.00px;font-size:8.1px;line-height:9.72px;color:#222;-webkit-text-stroke:0.15px #222;transform:scaleX(0.864);">activity_donate.xml</span>
<div style="left:161.2px;top:57.3px;width:276px;height:335px;background:#ffffff;"></div>
<div style="left:161.2px;top:57.3px;width:27.6px;height:335px;background:#f0f0f0;"></div>
<div style="left:188.8px;top:57.3px;width:0.6px;height:335px;background:#d4d4d4;"></div>
<div style="left:209.6px;top:57.3px;width:0.5px;height:335px;background:#f0f0f0;"></div>
<span class="t" style="left:163.90px;top:60.00px;font-size:7.4px;line-height:8.88px;color:#9c1f2e;font-family:'Liberation Mono', monospace;font-weight:bold;-webkit-text-stroke:0.1px #9c1f2e;transform:scaleX(0.913);">26</span>
<span class="t" style="left:163.90px;top:68.00px;font-size:7.4px;line-height:8.88px;color:#9c1f2e;font-family:'Liberation Mono', monospace;font-weight:bold;-webkit-text-stroke:0.1px #9c1f2e;transform:scaleX(0.913);">27</span>
<span class="t" style="left:163.90px;top:77.00px;font-size:7.4px;line-height:8.88px;color:#9c1f2e;font-family:'Liberation Mono', monospace;font-weight:bold;-webkit-text-stroke:0.1px #9c1f2e;transform:scaleX(0.913);">28</span>
<span class="t" style="left:163.90px;top:85.00px;font-size:7.4px;line-height:8.88px;color:#9c1f2e;font-family:'Liberation Mono', monospace;font-weight:bold;-webkit-text-stroke:0.1px #9c1f2e;transform:scaleX(0.913);">29</span>
<span class="t" style="left:163.90px;top:93.00px;font-size:7.4px;line-height:8.88px;color:#9c1f2e;font-family:'Liberation Mono', monospace;font-weight:bold;-webkit-text-stroke:0.1px #9c1f2e;transform:scaleX(0.913);">30</span>
<span class="t" style="left:163.90px;top:102.00px;font-size:7.4px;line-height:8.88px;color:#9c1f2e;font-family:'Liberation Mono', monospace;font-weight:bold;-webkit-text-stroke:0.1px #9c1f2e;transform:scaleX(0.913);">31</span>
<span class="t" style="left:163.90px;top:110.00px;font-size:7.4px;line-height:8.88px;color:#9c1f2e;font-family:'Liberation Mono', monospace;font-weight:bold;-webkit-text-stroke:0.1px #9c1f2e;transform:scaleX(0.913);">32</span>
<span class="t" style="left:163.90px;top:118.00px;font-size:7.4px;line-height:8.88px;color:#9c1f2e;font-family:'Liberation Mono', monospace;font-weight:bold;-webkit-text-stroke:0.1px #9c1f2e;transform:scaleX(0.913);">35</span>
<span class="t" style="left:163.90px;top:127.00px;font-size:7.4px;line-height:8.88px;color:#9c1f2e;font-family:'Liberation Mono', monospace;font-weight:bold;-webkit-text-stroke:0.1px #9c1f2e;transform:scaleX(0.913);">36</span>
<span class="t" style="left:163.90px;top:135.00px;font-size:7.4px;line-height:8.88px;color:#9c1f2e;font-family:'Liberation Mono', monospace;font-weight:bold;-webkit-text-stroke:0.1px #9c1f2e;transform:scaleX(0.913);">37</span>
<span class="t" style="left:163.90px;top:143.00px;font-size:7.4px;line-height:8.88px;color:#9c1f2e;font-family:'Liberation Mono', monospace;font-weight:bold;-webkit-text-stroke:0.1px #9c1f2e;transform:scaleX(0.913);">39</span>
<span class="t" style="left:163.90px;top:152.00px;font-size:7.4px;line-height:8.88px;color:#9c1f2e;font-family:'Liberation Mono', monospace;font-weight:bold;-webkit-text-stroke:0.1px #9c1f2e;transform:scaleX(0.913);">40</span>
<span class="t" style="left:163.90px;top:160.00px;font-size:7.4px;line-height:8.88px;color:#9c1f2e;font-family:'Liberation Mono', monospace;font-weight:bold;-webkit-text-stroke:0.1px #9c1f2e;transform:scaleX(0.913);">41</span>
<span class="t" style="left:163.90px;top:168.00px;font-size:7.4px;line-height:8.88px;color:#9c1f2e;font-family:'Liberation Mono', monospace;font-weight:bold;-webkit-text-stroke:0.1px #9c1f2e;transform:scaleX(0.913);">42</span>
<span class="t" style="left:163.90px;top:177.00px;font-size:7.4px;line-height:8.88px;color:#9c1f2e;font-family:'Liberation Mono', monospace;font-weight:bold;-webkit-text-stroke:0.1px #9c1f2e;transform:scaleX(0.913);">43</span>
<span class="t" style="left:163.90px;top:185.00px;font-size:7.4px;line-height:8.88px;color:#9c1f2e;font-family:'Liberation Mono', monospace;font-weight:bold;-webkit-text-stroke:0.1px #9c1f2e;transform:scaleX(0.913);">44</span>
<span class="t" style="left:163.90px;top:193.00px;font-size:7.4px;line-height:8.88px;color:#9c1f2e;font-family:'Liberation Mono', monospace;font-weight:bold;-webkit-text-stroke:0.1px #9c1f2e;transform:scaleX(0.913);">45</span>
<span class="t" style="left:163.90px;top:202.00px;font-size:7.4px;line-height:8.88px;color:#9c1f2e;font-family:'Liberation Mono', monospace;font-weight:bold;-webkit-text-stroke:0.1px #9c1f2e;transform:scaleX(0.913);">46</span>
<span class="t" style="left:163.90px;top:210.00px;font-size:7.4px;line-height:8.88px;color:#9c1f2e;font-family:'Liberation Mono', monospace;font-weight:bold;-webkit-text-stroke:0.1px #9c1f2e;transform:scaleX(0.913);">47</span>
<span class="t" style="left:163.90px;top:218.00px;font-size:7.4px;line-height:8.88px;color:#9c1f2e;font-family:'Liberation Mono', monospace;font-weight:bold;-webkit-text-stroke:0.1px #9c1f2e;transform:scaleX(0.913);">48</span>
<span class="t" style="left:163.90px;top:227.00px;font-size:7.4px;line-height:8.88px;color:#9c1f2e;font-family:'Liberation Mono', monospace;font-weight:bold;-webkit-text-stroke:0.1px #9c1f2e;transform:scaleX(0.913);">49</span>
<span class="t" style="left:163.90px;top:235.00px;font-size:7.4px;line-height:8.88px;color:#9c1f2e;font-family:'Liberation Mono', monospace;font-weight:bold;-webkit-text-stroke:0.1px #9c1f2e;transform:scaleX(0.913);">50</span>
<span class="t" style="left:163.90px;top:243.00px;font-size:7.4px;line-height:8.88px;color:#9c1f2e;font-family:'Liberation Mono', monospace;font-weight:bold;-webkit-text-stroke:0.1px #9c1f2e;transform:scaleX(0.913);">51</span>
<span class="t" style="left:163.90px;top:252.00px;font-size:7.4px;line-height:8.88px;color:#9c1f2e;font-family:'Liberation Mono', monospace;font-weight:bold;-webkit-text-stroke:0.1px #9c1f2e;transform:scaleX(0.913);">52</span>
<span class="t" style="left:163.90px;top:260.00px;font-size:7.4px;line-height:8.88px;color:#9c1f2e;font-family:'Liberation Mono', monospace;font-weight:bold;-webkit-text-stroke:0.1px #9c1f2e;transform:scaleX(0.913);">53</span>
<span class="t" style="left:163.90px;top:268.00px;font-size:7.4px;line-height:8.88px;color:#9c1f2e;font-family:'Liberation Mono', monospace;font-weight:bold;-webkit-text-stroke:0.1px #9c1f2e;transform:scaleX(0.913);">54</span>
<span class="t" style="left:163.90px;top:277.00px;font-size:7.4px;line-height:8.88px;color:#9c1f2e;font-family:'Liberation Mono', monospace;font-weight:bold;-webkit-text-stroke:0.1px #9c1f2e;transform:scaleX(0.913);">55</span>
<span class="t" style="left:163.90px;top:285.00px;font-size:7.4px;line-height:8.88px;color:#9c1f2e;font-family:'Liberation Mono', monospace;font-weight:bold;-webkit-text-stroke:0.1px #9c1f2e;transform:scaleX(0.913);">56</span>
<span class="t" style="left:163.90px;top:293.00px;font-size:7.4px;line-height:8.88px;color:#9c1f2e;font-family:'Liberation Mono', monospace;font-weight:bold;-webkit-text-stroke:0.1px #9c1f2e;transform:scaleX(0.913);">57</span>
<span class="t" style="left:163.90px;top:302.00px;font-size:7.4px;line-height:8.88px;color:#9c1f2e;font-family:'Liberation Mono', monospace;font-weight:bold;-webkit-text-stroke:0.1px #9c1f2e;transform:scaleX(0.913);">58</span>
<span class="t" style="left:163.90px;top:310.00px;font-size:7.4px;line-height:8.88px;color:#9c1f2e;font-family:'Liberation Mono', monospace;font-weight:bold;-webkit-text-stroke:0.1px #9c1f2e;transform:scaleX(0.913);">59</span>
<span class="t" style="left:163.90px;top:318.00px;font-size:7.4px;line-height:8.88px;color:#9c1f2e;font-family:'Liberation Mono', monospace;font-weight:bold;-webkit-text-stroke:0.1px #9c1f2e;transform:scaleX(0.913);">60</span>
<span class="t" style="left:163.90px;top:327.00px;font-size:7.4px;line-height:8.88px;color:#9c1f2e;font-family:'Liberation Mono', monospace;font-weight:bold;-webkit-text-stroke:0.1px #9c1f2e;transform:scaleX(0.913);">61</span>
<span class="t" style="left:163.90px;top:335.00px;font-size:7.4px;line-height:8.88px;color:#9c1f2e;font-family:'Liberation Mono', monospace;font-weight:bold;-webkit-text-stroke:0.1px #9c1f2e;transform:scaleX(0.913);">62</span>
<span class="t" style="left:163.90px;top:343.00px;font-size:7.4px;line-height:8.88px;color:#9c1f2e;font-family:'Liberation Mono', monospace;font-weight:bold;-webkit-text-stroke:0.1px #9c1f2e;transform:scaleX(0.913);">63</span>
<span class="t" style="left:163.90px;top:352.00px;font-size:7.4px;line-height:8.88px;color:#9c1f2e;font-family:'Liberation Mono', monospace;font-weight:bold;-webkit-text-stroke:0.1px #9c1f2e;transform:scaleX(0.913);">64</span>
<span class="t" style="left:163.90px;top:360.00px;font-size:7.4px;line-height:8.88px;color:#9c1f2e;font-family:'Liberation Mono', monospace;font-weight:bold;-webkit-text-stroke:0.1px #9c1f2e;transform:scaleX(0.913);">65</span>
<span class="t" style="left:163.90px;top:368.00px;font-size:7.4px;line-height:8.88px;color:#9c1f2e;font-family:'Liberation Mono', monospace;font-weight:bold;-webkit-text-stroke:0.1px #9c1f2e;transform:scaleX(0.913);">66</span>
<span class="t" style="left:163.90px;top:377.00px;font-size:7.4px;line-height:8.88px;color:#9c1f2e;font-family:'Liberation Mono', monospace;font-weight:bold;-webkit-text-stroke:0.1px #9c1f2e;transform:scaleX(0.913);">67</span>
<span class="t" style="left:163.90px;top:385.00px;font-size:7.4px;line-height:8.88px;color:#9c1f2e;font-family:'Liberation Mono', monospace;font-weight:bold;-webkit-text-stroke:0.1px #9c1f2e;transform:scaleX(0.913);">68</span>
<div style="left:313.2px;top:109.39979999999998px;width:21.8px;height:8.6px;background:#e4f4dc;"></div>
<span class="t" style="left:223.75px;top:60.00px;font-size:7.0px;line-height:8.40px;color:#000080;font-family:'Liberation Mono', monospace;font-weight:bold;transform:scaleX(0.928);">super</span>
<span class="t" style="left:243.25px;top:60.00px;font-size:7.0px;line-height:8.40px;color:#000000;font-family:'Liberation Mono', monospace;-webkit-text-stroke:0.18px #000000;transform:scaleX(0.928);">.onCreate(savedInstanceState);</span>
<span class="t" style="left:223.75px;top:68.00px;font-size:7.0px;line-height:8.40px;color:#000000;font-family:'Liberation Mono', monospace;-webkit-text-stroke:0.18px #000000;transform:scaleX(0.928);">setContentView(R.layout.</span>
<span class="t" style="left:317.35px;top:68.00px;font-size:7.0px;line-height:8.40px;color:#660e7a;font-family:'Liberation Mono', monospace;font-weight:bold;font-style:italic;transform:scaleX(0.928);">activity_donate</span>
<span class="t" style="left:375.85px;top:68.00px;font-size:7.0px;line-height:8.40px;color:#000000;font-family:'Liberation Mono', monospace;-webkit-text-stroke:0.18px #000000;transform:scaleX(0.928);">);</span>
<span class="t" style="left:223.75px;top:77.00px;font-size:7.0px;line-height:8.40px;color:#000000;font-family:'Liberation Mono', monospace;-webkit-text-stroke:0.18px #000000;transform:scaleX(0.928);">Toolbar toolbar = (Toolbar) findViewById(R.id.</span>
<span class="t" style="left:403.15px;top:77.00px;font-size:7.0px;line-height:8.40px;color:#660e7a;font-family:'Liberation Mono', monospace;font-weight:bold;font-style:italic;transform:scaleX(0.928);">toolbar</span>
<span class="t" style="left:430.45px;top:77.00px;font-size:7.0px;line-height:8.40px;color:#000000;font-family:'Liberation Mono', monospace;-webkit-text-stroke:0.18px #000000;transform:scaleX(0.928);">);</span>
<span class="t" style="left:223.75px;top:85.00px;font-size:7.0px;line-height:8.40px;color:#000000;font-family:'Liberation Mono', monospace;-webkit-text-stroke:0.18px #000000;transform:scaleX(0.928);">setSupportActionBar(toolbar);</span>
<span class="t" style="left:223.75px;top:102.00px;font-size:7.0px;line-height:8.40px;color:#000000;font-family:'Liberation Mono', monospace;-webkit-text-stroke:0.18px #000000;transform:scaleX(0.928);">FloatingActionButton fab = (FloatingActionButton) findViewById(R.id.</span>
<span class="t" style="left:488.95px;top:102.00px;font-size:7.0px;line-height:8.40px;color:#660e7a;font-family:'Liberation Mono', monospace;font-weight:bold;font-style:italic;transform:scaleX(0.928);">fab</span>
<span class="t" style="left:500.65px;top:102.00px;font-size:7.0px;line-height:8.40px;color:#000000;font-family:'Liberation Mono', monospace;-webkit-text-stroke:0.18px #000000;transform:scaleX(0.928);">);</span>
<span class="t" style="left:223.75px;top:110.00px;font-size:7.0px;line-height:8.40px;color:#000000;font-family:'Liberation Mono', monospace;-webkit-text-stroke:0.18px #000000;transform:scaleX(0.928);">fab.setOnClickListener((view)</span>
<svg style="left:340.75px;top:111.59979999999999px;" width="3.9" height="4.4" viewBox="0 0 3.9 4.4"><path d="M0.2,2.2H3.5M2.2,0.8L3.6,2.2L2.2,3.6" fill="none" stroke="#222" stroke-width="0.6"/></svg>
<span class="t" style="left:348.55px;top:110.00px;font-size:7.0px;line-height:8.40px;color:#000000;font-family:'Liberation Mono', monospace;-webkit-text-stroke:0.18px #000000;transform:scaleX(0.928);">{</span>
<span class="t" style="left:254.95px;top:118.00px;font-size:7.0px;line-height:8.40px;color:#000000;font-family:'Liberation Mono', monospace;-webkit-text-stroke:0.18px #000000;transform:scaleX(0.928);">Snackbar.make(view,</span>
<span class="t" style="left:332.95px;top:118.00px;font-size:7.0px;line-height:8.40px;color:#008000;font-family:'Liberation Mono', monospace;font-weight:bold;transform:scaleX(0.928);">"Replace with your own action"</span>
<span class="t" style="left:449.95px;top:118.00px;font-size:7.0px;line-height:8.40px;color:#000000;font-family:'Liberation Mono', monospace;-webkit-text-stroke:0.18px #000000;transform:scaleX(0.928);">, Snackbar.LENGTH_LONG)</span>
<span class="t" style="left:286.15px;top:127.00px;font-size:7.0px;line-height:8.40px;color:#000000;font-family:'Liberation Mono', monospace;-webkit-text-stroke:0.18px #000000;transform:scaleX(0.928);">.setAction(</span>
<span class="t" style="left:329.05px;top:127.00px;font-size:7.0px;line-height:8.40px;color:#008000;font-family:'Liberation Mono', monospace;font-weight:bold;transform:scaleX(0.928);">"Action"</span>
<span class="t" style="left:360.25px;top:127.00px;font-size:7.0px;line-height:8.40px;color:#000000;font-family:'Liberation Mono', monospace;-webkit-text-stroke:0.18px #000000;transform:scaleX(0.928);">,</span>
<span class="t" style="left:368.05px;top:127.00px;font-size:7.0px;line-height:8.40px;color:#000080;font-family:'Liberation Mono', monospace;font-weight:bold;transform:scaleX(0.928);">null</span>
<span class="t" style="left:383.65px;top:127.00px;font-size:7.0px;line-height:8.40px;color:#000000;font-family:'Liberation Mono', monospace;-webkit-text-stroke:0.18px #000000;transform:scaleX(0.928);">).show();</span>
<span class="t" style="left:223.75px;top:135.00px;font-size:7.0px;line-height:8.40px;color:#000000;font-family:'Liberation Mono', monospace;-webkit-text-stroke:0.18px #000000;transform:scaleX(0.928);">});</span>
<span class="t" style="left:223.75px;top:152.00px;font-size:7.0px;line-height:8.40px;color:#660e7a;font-family:'Liberation Mono', monospace;font-weight:bold;transform:scaleX(0.928);">donateButton</span>
<span class="t" style="left:274.45px;top:152.00px;font-size:7.0px;line-height:8.40px;color:#000000;font-family:'Liberation Mono', monospace;-webkit-text-stroke:0.18px #000000;transform:scaleX(0.928);">= (Button) findViewById(R.id.</span>
<span class="t" style="left:387.55px;top:152.00px;font-size:7.0px;line-height:8.40px;color:#660e7a;font-family:'Liberation Mono', monospace;font-weight:bold;font-style:italic;transform:scaleX(0.928);">donateButton</span>
<span class="t" style="left:434.35px;top:152.00px;font-size:7.0px;line-height:8.40px;color:#000000;font-family:'Liberation Mono', monospace;-webkit-text-stroke:0.18px #000000;transform:scaleX(0.928);">);</span>
<span class="t" style="left:223.75px;top:168.00px;font-size:7.0px;line-height:8.40px;color:#000080;font-family:'Liberation Mono', monospace;font-weight:bold;transform:scaleX(0.928);">if</span>
<span class="t" style="left:235.45px;top:168.00px;font-size:7.0px;line-height:8.40px;color:#000000;font-family:'Liberation Mono', monospace;-webkit-text-stroke:0.18px #000000;transform:scaleX(0.928);">(</span>
<span class="t" style="left:239.35px;top:168.00px;font-size:7.0px;line-height:8.40px;color:#660e7a;font-family:'Liberation Mono', monospace;font-weight:bold;transform:scaleX(0.928);">donateButton</span>
<span class="t" style="left:290.05px;top:168.00px;font-size:7.0px;line-height:8.40px;color:#000000;font-family:'Liberation Mono', monospace;-webkit-text-stroke:0.18px #000000;transform:scaleX(0.928);">!=</span>
<span class="t" style="left:301.75px;top:168.00px;font-size:7.0px;line-height:8.40px;color:#000080;font-family:'Liberation Mono', monospace;font-weight:bold;transform:scaleX(0.928);">null</span>
<span class="t" style="left:317.35px;top:168.00px;font-size:7.0px;line-height:8.40px;color:#000000;font-family:'Liberation Mono', monospace;-webkit-text-stroke:0.18px #000000;transform:scaleX(0.928);">)</span>
<span class="t" style="left:223.75px;top:177.00px;font-size:7.0px;line-height:8.40px;color:#000000;font-family:'Liberation Mono', monospace;-webkit-text-stroke:0.18px #000000;transform:scaleX(0.928);">{</span>
<span class="t" style="left:239.35px;top:185.00px;font-size:7.0px;line-height:8.40px;color:#000000;font-family:'Liberation Mono', monospace;-webkit-text-stroke:0.18px #000000;transform:scaleX(0.928);">Log.</span>
<span class="t" style="left:254.95px;top:185.00px;font-size:7.0px;line-height:8.40px;color:#000000;font-family:'Liberation Mono', monospace;-webkit-text-stroke:0.18px #000000;transform:scaleX(0.928);">v</span>
<span class="t" style="left:258.85px;top:185.00px;font-size:7.0px;line-height:8.40px;color:#000000;font-family:'Liberation Mono', monospace;-webkit-text-stroke:0.18px #000000;transform:scaleX(0.928);">(</span>
<span class="t" style="left:262.75px;top:185.00px;font-size:7.0px;line-height:8.40px;color:#008000;font-family:'Liberation Mono', monospace;font-weight:bold;transform:scaleX(0.928);">"Donate"</span>
<span class="t" style="left:293.95px;top:185.00px;font-size:7.0px;line-height:8.40px;color:#000000;font-family:'Liberation Mono', monospace;-webkit-text-stroke:0.18px #000000;transform:scaleX(0.928);">,</span>
<span class="t" style="left:301.75px;top:185.00px;font-size:7.0px;line-height:8.40px;color:#008000;font-family:'Liberation Mono', monospace;font-weight:bold;transform:scaleX(0.928);">"Really got the donate button"</span>
<span class="t" style="left:418.75px;top:185.00px;font-size:7.0px;line-height:8.40px;color:#000000;font-family:'Liberation Mono', monospace;-webkit-text-stroke:0.18px #000000;transform:scaleX(0.928);">);</span>
<span class="t" style="left:223.75px;top:193.00px;font-size:7.0px;line-height:8.40px;color:#000000;font-family:'Liberation Mono', monospace;-webkit-text-stroke:0.18px #000000;transform:scaleX(0.928);">}</span>
<span class="t" style="left:223.75px;top:210.00px;font-size:7.0px;line-height:8.40px;color:#660e7a;font-family:'Liberation Mono', monospace;font-weight:bold;transform:scaleX(0.928);">paymentMethod</span>
<span class="t" style="left:278.35px;top:210.00px;font-size:7.0px;line-height:8.40px;color:#000000;font-family:'Liberation Mono', monospace;-webkit-text-stroke:0.18px #000000;transform:scaleX(0.928);">= (RadioGroup)   findViewById(R.id.</span>
<span class="t" style="left:414.85px;top:210.00px;font-size:7.0px;line-height:8.40px;color:#660e7a;font-family:'Liberation Mono', monospace;font-weight:bold;font-style:italic;transform:scaleX(0.928);">paymentMethod</span>
<span class="t" style="left:465.55px;top:210.00px;font-size:7.0px;line-height:8.40px;color:#000000;font-family:'Liberation Mono', monospace;-webkit-text-stroke:0.18px #000000;transform:scaleX(0.928);">);</span>
<span class="t" style="left:223.75px;top:218.00px;font-size:7.0px;line-height:8.40px;color:#660e7a;font-family:'Liberation Mono', monospace;font-weight:bold;transform:scaleX(0.928);">progressBar</span>
<span class="t" style="left:278.35px;top:218.00px;font-size:7.0px;line-height:8.40px;color:#000000;font-family:'Liberation Mono', monospace;-webkit-text-stroke:0.18px #000000;transform:scaleX(0.928);">= (ProgressBar)  findViewById(R.id.</span>
<span class="t" style="left:414.85px;top:218.00px;font-size:7.0px;line-height:8.40px;color:#660e7a;font-family:'Liberation Mono', monospace;font-weight:bold;font-style:italic;transform:scaleX(0.928);">progressBar</span>
<span class="t" style="left:457.75px;top:218.00px;font-size:7.0px;line-height:8.40px;color:#000000;font-family:'Liberation Mono', monospace;-webkit-text-stroke:0.18px #000000;transform:scaleX(0.928);">);</span>
<span class="t" style="left:223.75px;top:227.00px;font-size:7.0px;line-height:8.40px;color:#660e7a;font-family:'Liberation Mono', monospace;font-weight:bold;transform:scaleX(0.928);">amountPicker</span>
<span class="t" style="left:278.35px;top:227.00px;font-size:7.0px;line-height:8.40px;color:#000000;font-family:'Liberation Mono', monospace;-webkit-text-stroke:0.18px #000000;transform:scaleX(0.928);">= (NumberPicker) findViewById(R.id.</span>
<span class="t" style="left:414.85px;top:227.00px;font-size:7.0px;line-height:8.40px;color:#660e7a;font-family:'Liberation Mono', monospace;font-weight:bold;font-style:italic;transform:scaleX(0.928);">amountPicker</span>
<span class="t" style="left:461.65px;top:227.00px;font-size:7.0px;line-height:8.40px;color:#000000;font-family:'Liberation Mono', monospace;-webkit-text-stroke:0.18px #000000;transform:scaleX(0.928);">);</span>
<span class="t" style="left:223.75px;top:243.00px;font-size:7.0px;line-height:8.40px;color:#660e7a;font-family:'Liberation Mono', monospace;font-weight:bold;transform:scaleX(0.928);">amountPicker</span>
<span class="t" style="left:270.55px;top:243.00px;font-size:7.0px;line-height:8.40px;color:#000000;font-family:'Liberation Mono', monospace;-webkit-text-stroke:0.18px #000000;transform:scaleX(0.928);">.setMinValue(</span>
<span class="t" style="left:321.25px;top:243.00px;font-size:7.0px;line-height:8.40px;color:#0000ff;font-family:'Liberation Mono', monospace;transform:scaleX(0.928);">0</span>
<span class="t" style="left:325.15px;top:243.00px;font-size:7.0px;line-height:8.40px;color:#000000;font-family:'Liberation Mono', monospace;-webkit-text-stroke:0.18px #000000;transform:scaleX(0.928);">);</span>
<span class="t" style="left:223.75px;top:252.00px;font-size:7.0px;line-height:8.40px;color:#660e7a;font-family:'Liberation Mono', monospace;font-weight:bold;transform:scaleX(0.928);">amountPicker</span>
<span class="t" style="left:270.55px;top:252.00px;font-size:7.0px;line-height:8.40px;color:#000000;font-family:'Liberation Mono', monospace;-webkit-text-stroke:0.18px #000000;transform:scaleX(0.928);">.setMaxValue(</span>
<span class="t" style="left:321.25px;top:252.00px;font-size:7.0px;line-height:8.40px;color:#0000ff;font-family:'Liberation Mono', monospace;transform:scaleX(0.928);">1000</span>
<span class="t" style="left:336.85px;top:252.00px;font-size:7.0px;line-height:8.40px;color:#000000;font-family:'Liberation Mono', monospace;-webkit-text-stroke:0.18px #000000;transform:scaleX(0.928);">);</span>
<span class="t" style="left:208.15px;top:260.00px;font-size:7.0px;line-height:8.40px;color:#000000;font-family:'Liberation Mono', monospace;-webkit-text-stroke:0.18px #000000;transform:scaleX(0.928);">}</span>
<span class="t" style="left:208.15px;top:277.00px;font-size:7.0px;line-height:8.40px;color:#808000;font-family:'Liberation Mono', monospace;transform:scaleX(0.928);">@Override</span>
<span class="t" style="left:208.15px;top:285.00px;font-size:7.0px;line-height:8.40px;color:#000080;font-family:'Liberation Mono', monospace;font-weight:bold;transform:scaleX(0.928);">public boolean</span>
<span class="t" style="left:266.65px;top:285.00px;font-size:7.0px;line-height:8.40px;color:#000000;font-family:'Liberation Mono', monospace;-webkit-text-stroke:0.18px #000000;transform:scaleX(0.928);">onCreateOptionsMenu(Menu menu) {</span>
<span class="t" style="left:223.75px;top:293.00px;font-size:7.0px;line-height:8.40px;color:#8c8c8c;font-family:'Liberation Mono', monospace;font-style:italic;transform:scaleX(0.928);">// Inflate the menu; this adds items to the action bar if it is present.</span>
<span class="t" style="left:223.75px;top:302.00px;font-size:7.0px;line-height:8.40px;color:#000000;font-family:'Liberation Mono', monospace;-webkit-text-stroke:0.18px #000000;transform:scaleX(0.928);">getMenuInflater().inflate(R.menu.</span>
<span class="t" style="left:352.45px;top:302.00px;font-size:7.0px;line-height:8.40px;color:#660e7a;font-family:'Liberation Mono', monospace;font-weight:bold;font-style:italic;transform:scaleX(0.928);">menu_donate</span>
<span class="t" style="left:395.35px;top:302.00px;font-size:7.0px;line-height:8.40px;color:#000000;font-family:'Liberation Mono', monospace;-webkit-text-stroke:0.18px #000000;transform:scaleX(0.928);">, menu);</span>
<span class="t" style="left:223.75px;top:310.00px;font-size:7.0px;line-height:8.40px;color:#000080;font-family:'Liberation Mono', monospace;font-weight:bold;transform:scaleX(0.928);">return true</span>
<span class="t" style="left:266.65px;top:310.00px;font-size:7.0px;line-height:8.40px;color:#000000;font-family:'Liberation Mono', monospace;-webkit-text-stroke:0.18px #000000;transform:scaleX(0.928);">;</span>
<span class="t" style="left:208.15px;top:318.00px;font-size:7.0px;line-height:8.40px;color:#000000;font-family:'Liberation Mono', monospace;-webkit-text-stroke:0.18px #000000;transform:scaleX(0.928);">}</span>
<span class="t" style="left:208.15px;top:335.00px;font-size:7.0px;line-height:8.40px;color:#808000;font-family:'Liberation Mono', monospace;transform:scaleX(0.928);">@Override</span>
<span class="t" style="left:208.15px;top:343.00px;font-size:7.0px;line-height:8.40px;color:#000080;font-family:'Liberation Mono', monospace;font-weight:bold;transform:scaleX(0.928);">public boolean</span>
<span class="t" style="left:266.65px;top:343.00px;font-size:7.0px;line-height:8.40px;color:#000000;font-family:'Liberation Mono', monospace;-webkit-text-stroke:0.18px #000000;transform:scaleX(0.928);">onOptionsItemSelected(MenuItem item) {</span>
<span class="t" style="left:223.75px;top:352.00px;font-size:7.0px;line-height:8.40px;color:#8c8c8c;font-family:'Liberation Mono', monospace;font-style:italic;transform:scaleX(0.928);">// Handle action bar item clicks here. The action bar will</span>
<span class="t" style="left:223.75px;top:360.00px;font-size:7.0px;line-height:8.40px;color:#8c8c8c;font-family:'Liberation Mono', monospace;font-style:italic;transform:scaleX(0.928);">// automatically handle clicks on the Home/Up button, so long</span>
<span class="t" style="left:223.75px;top:368.00px;font-size:7.0px;line-height:8.40px;color:#8c8c8c;font-family:'Liberation Mono', monospace;font-style:italic;transform:scaleX(0.928);">// as you specify a parent activity in AndroidManifest.xml.</span>
<span class="t" style="left:223.75px;top:377.00px;font-size:7.0px;line-height:8.40px;color:#000080;font-family:'Liberation Mono', monospace;font-weight:bold;transform:scaleX(0.928);">int</span>
<span class="t" style="left:239.35px;top:377.00px;font-size:7.0px;line-height:8.40px;color:#000000;font-family:'Liberation Mono', monospace;-webkit-text-stroke:0.18px #000000;transform:scaleX(0.928);">id = item.getItemId();</span>
<svg style="left:186.4px;top:260.7992px;" width="5.6" height="5.6" viewBox="0 0 5.6 5.6"><circle cx="2.8" cy="2.8" r="2.2" fill="#fff" stroke="#c4c4c4" stroke-width="0.6"/></svg>
<svg style="left:186.4px;top:285.7991px;" width="5.6" height="5.6" viewBox="0 0 5.6 5.6"><circle cx="2.8" cy="2.8" r="2.2" fill="#fff" stroke="#c4c4c4" stroke-width="0.6"/></svg>
<svg style="left:186.4px;top:319.1323px;" width="5.6" height="5.6" viewBox="0 0 5.6 5.6"><circle cx="2.8" cy="2.8" r="2.2" fill="#fff" stroke="#c4c4c4" stroke-width="0.6"/></svg>
<svg style="left:186.4px;top:344.1322px;" width="5.6" height="5.6" viewBox="0 0 5.6 5.6"><circle cx="2.8" cy="2.8" r="2.2" fill="#fff" stroke="#c4c4c4" stroke-width="0.6"/></svg>
<svg style="left:186.4px;top:352.4655px;" width="5.6" height="5.6" viewBox="0 0 5.6 5.6"><circle cx="2.8" cy="2.8" r="2.2" fill="#fff" stroke="#c4c4c4" stroke-width="0.6"/></svg>
<svg style="left:186.4px;top:369.1321px;" width="5.6" height="5.6" viewBox="0 0 5.6 5.6"><circle cx="2.8" cy="2.8" r="2.2" fill="#fff" stroke="#c4c4c4" stroke-width="0.6"/></svg>
<div style="left:174.8px;top:111.4998px;width:4.3px;height:4.3px;border-radius:50%;background:#3f9f48"></div>
<svg style="left:179.4px;top:109.59979999999999px;" width="3" height="6.4" viewBox="0 0 3 6.4"><path d="M1.5,0.2L2.8,2H0.2z" fill="#d0353f"/><path d="M1.5,1.6V6.2" stroke="#d0353f" stroke-width="0.6"/></svg>
<svg style="left:186.2px;top:110.79979999999999px;" width="5.6" height="5.6" viewBox="0 0 5.6 5.6"><rect x="0.4" y="0.4" width="4.8" height="4.8" fill="#fff" stroke="#c4c4c4" stroke-width="0.6"/><path d="M1.4,2.8h2.8M2.8,1.4v2.8" stroke="#aaa" stroke-width="0.6"/></svg>
<div style="left:174.8px;top:286.4991px;width:4.2px;height:4.2px;border-radius:50%;background:#5a9fd8"></div>
<svg style="left:179.4px;top:284.5991px;" width="3" height="6.4" viewBox="0 0 3 6.4"><path d="M1.5,0.2L2.8,2H0.2z" fill="#d0353f"/><path d="M1.5,1.6V6.2" stroke="#d0353f" stroke-width="0.6"/></svg>
<div style="left:174.8px;top:344.8322px;width:4.2px;height:4.2px;border-radius:50%;background:#5a9fd8"></div>
<svg style="left:179.4px;top:342.9322px;" width="3" height="6.4" viewBox="0 0 3 6.4"><path d="M1.5,0.2L2.8,2H0.2z" fill="#d0353f"/><path d="M1.5,1.6V6.2" stroke="#d0353f" stroke-width="0.6"/></svg>
<div style="left:11.6px;top:392px;width:425.4px;height:0.8px;background:#b8b8b8;"></div>
<div style="left:11.6px;top:392.8px;width:425.4px;height:11.4px;background:linear-gradient(#e8e8e8,#dddddd);"></div>
<span class="t" style="left:14.60px;top:394.00px;font-size:8px;line-height:9.60px;color:#777;transform:scaleX(0.860);">Android Monitor</span>
<div style="left:11.6px;top:404.2px;width:425.4px;height:16px;background:#ececec;"></div>
<div style="left:11.6px;top:404.2px;width:425.4px;height:0.6px;background:#cfcfcf;"></div>
<div style="left:29px;top:407px;width:259.5px;height:10.4px;background:#fff;border-radius:2.6px;box-shadow:0 0 0 0.6px #c9c9c9,0 0.6px 0.8px #bbb"></div>
<svg style="left:38px;top:408.8px;" width="7" height="7" viewBox="0 0 7 7"><rect x="0.4" y="0.6" width="2" height="5.6" fill="#9a9a9a"/><rect x="2.8" y="0.6" width="3.6" height="5.6" fill="#7fc4e8" stroke="#777" stroke-width="0.5"/></svg>
<span class="t" style="left:47.30px;top:407.00px;font-size:8.4px;line-height:10.08px;color:#111;font-weight:bold;transform:scaleX(0.876);">Emulator Nexus_4_API_22</span>
<span class="t" style="left:142.40px;top:407.00px;font-size:8.4px;line-height:10.08px;color:#777;transform:scaleX(0.930);">Android 5.1 (API 22)</span>
<svg style="left:281.4px;top:408.4px;" width="5" height="8" viewBox="0 0 5 8"><path d="M0.6,3L2.5,0.8L4.4,3M0.6,5L2.5,7.2L4.4,5" fill="none" stroke="#333" stroke-width="0.8"/></svg>
<div style="left:300.3px;top:407px;width:150px;height:10.4px;background:#fff;border-radius:2.6px;box-shadow:0 0 0 0.6px #c9c9c9,0 0.6px 0.8px #bbb"></div>
<span class="t" style="left:308.80px;top:407.00px;font-size:8.4px;line-height:10.08px;color:#111;font-weight:bold;transform:scaleX(0.917);">ie.app</span>
<span class="t" style="left:333.60px;top:408.00px;font-size:8.4px;line-height:10.08px;color:#8a8a8a;font-family:'Liberation Serif', serif;">(1948)</span>
<div style="left:11.6px;top:420.2px;width:425.4px;height:20px;background:#ececec;"></div>
<div style="left:11.6px;top:420.2px;width:425.4px;height:0.6px;background:#c4c4c4;"></div>
<div style="left:28.5px;top:420.8px;width:209.2px;height:19.4px;background:#d2d2d2;"></div>
<div style="left:28.5px;top:421px;width:33.5px;height:19.6px;background:#ffffff;"></div>
<div style="left:28.2px;top:420.8px;width:0.6px;height:19.4px;background:#bcbcbc;"></div>
<div style="left:62px;top:420.8px;width:0.6px;height:19.4px;background:#bcbcbc;"></div>
<div style="left:112px;top:420.8px;width:0.6px;height:19.4px;background:#bcbcbc;"></div>
<div style="left:151px;top:420.8px;width:0.6px;height:19.4px;background:#bcbcbc;"></div>
<div style="left:187.5px;top:420.8px;width:0.6px;height:19.4px;background:#bcbcbc;"></div>
<div style="left:237.6px;top:420.8px;width:0.6px;height:19.4px;background:#bcbcbc;"></div>
<div style="left:11.6px;top:440.2px;width:425.4px;height:0.6px;background:#c4c4c4;"></div>
<svg style="left:31.2px;top:426.6px;" width="8" height="7" viewBox="0 0 8 7"><rect x="0" y="1" width="1.2" height="5" fill="#e0245e"/><rect x="1.6" y="0" width="1.2" height="6" fill="#3f8fd6"/><rect x="3.2" y="2" width="1.2" height="4" fill="#e9a13b"/><path d="M4.4,6L6,2.4L7.8,6z" fill="#58b04a"/></svg>
<span class="t" style="left:41.40px;top:426.00px;font-size:8px;line-height:9.60px;color:#111;-webkit-text-stroke:0.12px #111;transform:scaleX(0.871);">logcat</span>
<svg style="left:66.5px;top:426.59999999999997px;" width="7.6" height="7.2" viewBox="0 0 7.6 7.2"><rect x="0" y="0" width="7.6" height="7.2" fill="#3f7fc4"/><path d="M0.8,1l2.2,3.4L3.8,3l1.4,1.6L6.8,1v5.4h-6z" fill="#fff" opacity="0.55"/></svg>
<span class="t" style="left:76.00px;top:426.00px;font-size:8px;line-height:9.60px;color:#222;-webkit-text-stroke:0.12px #222;transform:scaleX(0.851);">Memory</span>
<svg style="left:116.1px;top:426.59999999999997px;" width="7.6" height="7.2" viewBox="0 0 7.6 7.2"><rect x="0" y="0" width="7.6" height="7.2" fill="#d9363b"/><path d="M0.8,1l2.2,3.4L3.8,3l1.4,1.6L6.8,1v5.4h-6z" fill="#fff" opacity="0.55"/></svg>
<span class="t" style="left:125.60px;top:426.00px;font-size:8px;line-height:9.60px;color:#222;-webkit-text-stroke:0.12px #222;transform:scaleX(0.829);">CPU</span>
<svg style="left:153.9px;top:426.59999999999997px;" width="7.6" height="7.2" viewBox="0 0 7.6 7.2"><rect x="0" y="0" width="7.6" height="7.2" fill="#4a2fa0"/><path d="M0.8,1l2.2,3.4L3.8,3l1.4,1.6L6.8,1v5.4h-6z" fill="#fff" opacity="0.55"/></svg>
<span class="t" style="left:163.40px;top:426.00px;font-size:8px;line-height:9.60px;color:#222;-webkit-text-stroke:0.12px #222;transform:scaleX(0.807);">GPU</span>
<svg style="left:191.3px;top:426.59999999999997px;" width="7.6" height="7.2" viewBox="0 0 7.6 7.2"><rect x="0" y="0" width="7.6" height="7.2" fill="#f58220"/><path d="M0.8,1l2.2,3.4L3.8,3l1.4,1.6L6.8,1v5.4h-6z" fill="#fff" opacity="0.55"/></svg>
<span class="t" style="left:201.40px;top:426.00px;font-size:8px;line-height:9.60px;color:#222;-webkit-text-stroke:0.12px #222;transform:scaleX(0.920);">Network</span>
<svg style="left:104.8px;top:428.0px;" width="7" height="4.4" viewBox="0 0 7 4.4"><path d="M0,2.4h3.6M2.3,1l1.4,1.4L2.3,3.8" stroke="#555" stroke-width="0.7" fill="none"/><path d="M5.4,0.4v1.6M4.7,0.8l1.4,0.8M6.1,0.8l-1.4,0.8" stroke="#555" stroke-width="0.45"/></svg>
<svg style="left:142.4px;top:428.0px;" width="7" height="4.4" viewBox="0 0 7 4.4"><path d="M0,2.4h3.6M2.3,1l1.4,1.4L2.3,3.8" stroke="#555" stroke-width="0.7" fill="none"/><path d="M5.4,0.4v1.6M4.7,0.8l1.4,0.8M6.1,0.8l-1.4,0.8" stroke="#555" stroke-width="0.45"/></svg>
<svg style="left:179.6px;top:428.0px;" width="7" height="4.4" viewBox="0 0 7 4.4"><path d="M0,2.4h3.6M2.3,1l1.4,1.4L2.3,3.8" stroke="#555" stroke-width="0.7" fill="none"/><path d="M5.4,0.4v1.6M4.7,0.8l1.4,0.8M6.1,0.8l-1.4,0.8" stroke="#555" stroke-width="0.45"/></svg>
<svg style="left:230.6px;top:428.0px;" width="7" height="4.4" viewBox="0 0 7 4.4"><path d="M0,2.4h3.6M2.3,1l1.4,1.4L2.3,3.8" stroke="#555" stroke-width="0.7" fill="none"/><path d="M5.4,0.4v1.6M4.7,0.8l1.4,0.8M6.1,0.8l-1.4,0.8" stroke="#555" stroke-width="0.45"/></svg>
<span class="t" style="left:365.60px;top:425.00px;font-size:8.3px;line-height:9.96px;color:#111;-webkit-text-stroke:0.2px #111;transform:scaleX(0.915);">Log level</span>
<span class="t" style="left:396.90px;top:425.00px;font-size:8.3px;line-height:9.96px;color:#111;-webkit-text-stroke:0.2px #111;">:</span>
<div style="left:406.7px;top:424.8px;width:60px;height:10.4px;background:#fff;border-radius:2.6px;box-shadow:0 0 0 0.6px #c9c9c9,0 0.6px 0.8px #bbb"></div>
<span class="t" style="left:413.80px;top:425.00px;font-size:8.4px;line-height:10.08px;color:#111;transform:scaleX(0.927);">Verbose</span>
<div style="left:11.6px;top:420.8px;width:16.7px;height:139.4px;background:#ececec;"></div>
<div style="left:28.5px;top:440.8px;width:17.7px;height:119.4px;background:#ececec;"></div>
<div style="left:46.2px;top:440.8px;width:0.6px;height:119.4px;background:#c9c9c9;"></div>
<div style="left:28.2px;top:440.8px;width:0.6px;height:119.4px;background:#c9c9c9;"></div>
<svg style="left:15.100000000000001px;top:423.8px;" width="9" height="9" viewBox="0 0 10 10"><rect x="0.8" y="2.4" width="8.4" height="6" rx="0.8" fill="#dfe9f2" stroke="#777" stroke-width="0.8"/><circle cx="5" cy="5.4" r="1.8" fill="#3f8fd6"/><rect x="1.6" y="1.2" width="2.4" height="1.2" fill="#777"/></svg>
<svg style="left:15.100000000000001px;top:437.7px;" width="9" height="9" viewBox="0 0 10 10"><rect x="1.2" y="1.2" width="7.6" height="7.6" fill="#bdbdbd"/><path d="M3.8,3l3,2l-3,2z" fill="#9c9c9c"/></svg>
<svg style="left:15.100000000000001px;top:451.9px;" width="9" height="9" viewBox="0 0 10 10"><rect x="2.2" y="1" width="6.6" height="6.6" fill="#f4f4f4" stroke="#777" stroke-width="0.8"/><circle cx="4" cy="5.6" r="2.4" fill="#e6f0f8" stroke="#555" stroke-width="0.9"/><path d="M5.8,7.4L8,9.6" stroke="#555" stroke-width="1.1"/></svg>
<div style="left:15px;top:466px;width:11px;height:0.6px;background:#c9c9c9;"></div>
<svg style="left:15.3px;top:469.7px;" width="8.6" height="8.6" viewBox="0 0 10 10"><circle cx="5" cy="5" r="4.2" fill="#e2353f"/><path d="M3.2,3.2l3.6,3.6M6.8,3.2l-3.6,3.6" stroke="#fff" stroke-width="1.1"/></svg>
<svg style="left:31.9px;top:445.5px;" width="9" height="9" viewBox="0 0 10 10"><path d="M2,3h6l-0.6,6.2h-4.8z" fill="#3f8fd6"/><rect x="1.4" y="1.8" width="7.2" height="1.2" fill="#2f6fa8"/><rect x="3.8" y="0.8" width="2.4" height="1" fill="#2f6fa8"/></svg>
<svg style="left:31.9px;top:459.3px;" width="9" height="9" viewBox="0 0 10 10"><rect x="0.8" y="1.4" width="8.4" height="7.2" rx="0.8" fill="#e6e6e6" stroke="#9a9a9a" stroke-width="0.8"/><path d="M2.4,4h4.4v2.4h-2M5.8,5.4l-1.2,1l1.2,1" stroke="#777" stroke-width="0.8" fill="none"/></svg>
<svg style="left:32.1px;top:473.3px;" width="8.6" height="8.6" viewBox="0 0 10 10"><path d="M5,1L8.6,5H6.4v4H3.6V5H1.4z" fill="#8a8a8a"/></svg>
<svg style="left:32.1px;top:487.2px;" width="8.6" height="8.6" viewBox="0 0 10 10"><path d="M5,9L8.6,5H6.4V1H3.6V5H1.4z" fill="#8a8a8a"/></svg>
<svg style="left:31.9px;top:500.9px;" width="9" height="9" viewBox="0 0 10 10"><rect x="0.8" y="1.6" width="8.4" height="6.8" fill="#eaf2fa" stroke="#3f8fd6" stroke-width="0.8"/><path d="M2.2,3.6h2M5.4,3.6h2.4M2.2,5h3M6.2,5h1.6M2.2,6.4h1.6M4.8,6.4h3" stroke="#3f8fd6" stroke-width="0.8"/></svg>
<svg style="left:31.9px;top:514.7px;" width="9" height="9" viewBox="0 0 10 10"><rect x="1" y="3.4" width="8" height="3.8" rx="0.6" fill="#3f8fd6"/><rect x="2.6" y="1" width="4.8" height="2.4" fill="#dfe9f2" stroke="#3f8fd6" stroke-width="0.6"/><rect x="2.6" y="6" width="4.8" height="3" fill="#f6f9fc" stroke="#3f8fd6" stroke-width="0.6"/></svg>
<div style="left:31px;top:528px;width:12px;height:0.6px;background:#c9c9c9;"></div>
<svg style="left:31.9px;top:532.5px;" width="9" height="9" viewBox="0 0 10 10"><path d="M7.4,2.4a3.4,3.4 0 1 0 1,3.2" fill="none" stroke="#33a933" stroke-width="1.4"/><path d="M5.6,0.4l2.8,1.8l-2.8,1.8z" fill="#33a933"/><rect x="5.6" y="6.4" width="3.2" height="2.8" fill="#8a8a8a"/></svg>
<svg style="left:32.1px;top:546.7px;" width="8.6" height="8.6" viewBox="0 0 10 10"><circle cx="5" cy="5" r="2.3" fill="none" stroke="#555" stroke-width="1.7"/><path d="M5,0.8v8.4M0.8,5h8.4M2,2l6,6M8,2l-6,6" stroke="#555" stroke-width="1.1"/><circle cx="5" cy="5" r="1.1" fill="#ececec"/></svg>
<div style="left:46.8px;top:440.8px;width:390.2px;height:119.4px;background:#fff;"></div>
<span class="t" style="left:50.00px;top:443.00px;font-size:7.0px;line-height:8.40px;color:#111;font-family:'Liberation Mono', monospace;-webkit-text-stroke:0.18px #111;transform:scaleX(0.926);">10-19 13:57:34.400 1948-1948/? V/Donate: Really got the donate button</span>
<span class="t" style="left:50.00px;top:451.00px;font-size:7.0px;line-height:8.40px;color:#111;font-family:'Liberation Mono', monospace;-webkit-text-stroke:0.18px #111;transform:scaleX(0.926);">10-19 13:59:10.748 1948-1948/ie.app V/Donate: Donate Pressed! with amount 1000</span>
<span class="t" style="left:50.00px;top:460.00px;font-size:7.0px;line-height:8.40px;color:#111;font-family:'Liberation Mono', monospace;-webkit-text-stroke:0.18px #111;transform:scaleX(0.926);">10-19 14:01:16.303 1948-1948/ie.app V/Donate: Donate Pressed! with amount 990</span>
<div style="left:0px;top:560px;width:437px;height:11.2px;background:#ececec;"></div>
<div style="left:0px;top:559.8px;width:437px;height:0.7px;background:#b8b8b8;"></div>
<div style="left:116.5px;top:560.4px;width:79.3px;height:10.8px;background:#c6c6c6;"></div>
<svg style="left:16.6px;top:562.8px;" width="7.4" height="6.8" viewBox="0 0 7.4 6.8"><rect x="0.3" y="0.3" width="6.8" height="6.2" fill="#4a4a4a" stroke="#222" stroke-width="0.5"/><path d="M1.4,2.2l1.4,1.2l-1.4,1.2M3.6,5h2" stroke="#fff" stroke-width="0.7" fill="none"/></svg>
<span class="t" style="left:26.20px;top:562.00px;font-size:8px;line-height:9.60px;color:#222;-webkit-text-stroke:0.12px #222;transform:scaleX(0.847);">Terminal</span>
<svg style="left:63.8px;top:562.8px;" width="7" height="6.8" viewBox="0 0 7 6.8"><rect x="0.3" y="0.3" width="6.4" height="6.2" fill="#eeb868" stroke="#d69a45" stroke-width="0.5"/><path d="M1.6,2.2h3.8M1.6,3.6h3.8M1.6,5h2.6" stroke="#f8dcae" stroke-width="0.6"/></svg>
<span class="t" style="left:74.00px;top:562.00px;font-size:8px;line-height:9.60px;color:#222;-webkit-text-stroke:0.12px #222;transform:scaleX(0.780);">0: Messages</span>
<div style="left:74px;top:569.4px;width:4px;height:0.5px;background:#222;"></div>
<svg style="left:122.3px;top:561.5999999999999px;" width="8" height="8" viewBox="0 0 10 10"><path d="M2,4.6a3,2.9 0 0 1 6,0z" fill="#7cb52e"/><rect x="2" y="5" width="6" height="3.6" rx="0.6" fill="#7cb52e"/><rect x="0.5" y="5" width="1.1" height="2.8" rx="0.5" fill="#7cb52e"/><rect x="8.4" y="5" width="1.1" height="2.8" rx="0.5" fill="#7cb52e"/><rect x="3" y="8" width="1.2" height="1.8" fill="#7cb52e"/><rect x="5.8" y="8" width="1.2" height="1.8" fill="#7cb52e"/><path d="M3,1.2l0.8,1.2M7,1.2l-0.8,1.2" stroke="#7cb52e" stroke-width="0.6"/></svg>
<span class="t" style="left:133.00px;top:562.00px;font-size:8px;line-height:9.60px;color:#222;-webkit-text-stroke:0.12px #222;transform:scaleX(0.870);">6: Android Monitor</span>
<div style="left:133px;top:569.4px;width:4px;height:0.5px;background:#222;"></div>
<svg style="left:202px;top:561.6px;" width="8" height="8" viewBox="0 0 8 8"><path d="M1,0.6L7.4,4L1,7.4z" fill="#2faa2f"/><circle cx="6.4" cy="6.4" r="1.3" fill="#2faa2f"/></svg>
<span class="t" style="left:212.60px;top:562.00px;font-size:8px;line-height:9.60px;color:#222;-webkit-text-stroke:0.12px #222;transform:scaleX(0.768);">4: Run</span>
<div style="left:212.6px;top:569.4px;width:4px;height:0.5px;background:#222;"></div>
<svg style="left:240.6px;top:561.6px;" width="8" height="8" viewBox="0 0 8 8"><circle cx="4" cy="2.4" r="1.8" fill="#f0c090"/><rect x="1.6" y="4" width="4.8" height="3.6" fill="#5a8fd0"/><rect x="5.6" y="3.2" width="2" height="2.4" fill="#e9a13b"/></svg>
<span class="t" style="left:251.20px;top:562.00px;font-size:8px;line-height:9.60px;color:#222;-webkit-text-stroke:0.12px #222;transform:scaleX(0.788);">TODO</span>
<div style="left:0px;top:571.2px;width:437px;height:11.8px;background:linear-gradient(#e6e6e6,#dadada);"></div>
<div style="left:0px;top:571.2px;width:437px;height:0.6px;background:#c2c2c2;"></div>
<svg style="left:2.2px;top:573.2px;" width="8.6" height="8.4" viewBox="0 0 8.6 8.4"><rect x="0.5" y="0.5" width="7.6" height="7.2" rx="1" fill="#d0d0d0" stroke="#6a6a6a" stroke-width="0.9"/><rect x="2" y="2" width="4.6" height="4.2" fill="#b4b4b4"/></svg>
<span class="t" style="left:17.00px;top:573.00px;font-size:8px;line-height:9.60px;color:#222;-webkit-text-stroke:0.12px #222;transform:scaleX(0.845);">Session 'app': running (5 minutes ago)</span>
<div style="left:177.2px;top:547.8px;width:76.6px;height:11.8px;background:#c9f0be;box-shadow:inset 0 0 0 0.7px #9fd392;border-radius:1.8px"></div>
<svg style="left:211.4px;top:559px;" width="9" height="7" viewBox="0 0 9 7"><path d="M0.4,0L4,6.4L7.6,0" fill="#c9f0be" stroke="#8fca80" stroke-width="0.6"/><path d="M0.6,0h6.8" stroke="#c9f0be" stroke-width="1"/></svg>
<span class="t" style="left:184.30px;top:550.00px;font-size:7.8px;line-height:9.36px;color:#222;transform:scaleX(0.829);">Session </span>
<span class="t" style="left:209.40px;top:550.00px;font-size:7.8px;line-height:9.36px;color:#2233cc;transform:scaleX(0.875);text-decoration:underline;">'app'</span>
<span class="t" style="left:223.60px;top:550.00px;font-size:7.8px;line-height:9.36px;color:#222;transform:scaleX(0.890);">: running</span>
<div style="left:0px;top:583px;width:437px;height:24px;background:#fdfdfd;"></div>
<div style="left:0px;top:585.6px;width:437px;height:0.7px;background:#d6d6d6;"></div>
<div style="left:0px;top:593.2px;width:437px;height:0.7px;background:#d6d6d6;"></div>
<div style="left:0px;top:601.2px;width:437px;height:0.7px;background:#d6d6d6;"></div>
<div style="left:10px;top:592px;width:0.7px;height:15px;background:#cfcfcf;"></div>
<div style="left:51.6px;top:592px;width:0.7px;height:15px;background:#cfcfcf;"></div>
<div style="left:121.75px;top:592px;width:0.7px;height:15px;background:#cfcfcf;"></div>
<div style="left:223.75px;top:592px;width:0.7px;height:15px;background:#cfcfcf;"></div>
<div style="left:277px;top:592px;width:0.7px;height:15px;background:#cfcfcf;"></div>
<div style="left:305.75px;top:592px;width:0.7px;height:15px;background:#cfcfcf;"></div>
<div style="left:335.5px;top:592px;width:0.7px;height:15px;background:#cfcfcf;"></div>
<div style="left:365px;top:592px;width:0.7px;height:15px;background:#cfcfcf;"></div>
<div style="left:394.5px;top:592px;width:0.7px;height:15px;background:#cfcfcf;"></div>
<div style="left:423.75px;top:592px;width:0.7px;height:15px;background:#cfcfcf;"></div>
<div style="left:10px;top:583px;width:0.7px;height:24px;background:#cfcfcf;"></div>
<div style="left:51.6px;top:583px;width:0.7px;height:24px;background:#cfcfcf;"></div>
<div style="left:0px;top:583px;width:10px;height:24px;background:#ededed;"></div>
<span class="t" style="left:-1.40px;top:580.00px;font-size:6.2px;line-height:7.44px;color:#666;transform:scaleX(0.929);">52</span>
<span class="t" style="left:-1.40px;top:587.00px;font-size:6.2px;line-height:7.44px;color:#666;transform:scaleX(0.929);">53</span>
<span class="t" style="left:-1.40px;top:595.00px;font-size:6.2px;line-height:7.44px;color:#666;transform:scaleX(0.929);">54</span>
<span class="t" style="left:-1.40px;top:603.00px;font-size:6.2px;line-height:7.44px;color:#666;transform:scaleX(0.929);">55</span>
<div style="left:78.75px;top:583px;width:358.25px;height:9.2px;background:#2b2b2b;"></div>
<div style="left:101px;top:583.6px;width:36.5px;height:8.6px;background:#4e4e4e;"></div>
<div style="left:137.5px;top:583.6px;width:0.6px;height:8.6px;background:#1c1c1c;"></div>
<span class="t" style="left:105.00px;top:584.00px;font-size:6.6px;line-height:7.92px;color:#ececec;font-weight:bold;transform:scaleX(0.836);">Mini Bridge</span>
<span class="t" style="left:142.50px;top:584.00px;font-size:6.6px;line-height:7.92px;color:#8c8c8c;font-weight:bold;transform:scaleX(0.845);">Timeline</span>
<div style="left:0px;top:582.6px;width:437px;height:0.8px;background:#9a9a9a;"></div>
<div style="left:0;top:583.4px;width:78.75px;height:3px;background:linear-gradient(rgba(0,0,0,0.14),rgba(0,0,0,0))"></div>
<div style="left:78.75px;top:592.2px;width:358px;height:2.4px;background:linear-gradient(rgba(0,0,0,0.2),rgba(0,0,0,0))"></div>
<div style="left:414px;top:3px;width:23px;height:604px;background:linear-gradient(90deg,rgba(0,0,0,0),rgba(0,0,0,0.03) 35%,rgba(0,0,0,0.1) 70%,rgba(0,0,0,0.22))"></div>
<div style="left:437px;top:3px;width:363px;height:604px;background:#808080;"></div>
<div style="left:799px;top:15px;width:1px;height:592px;background:#a2a2a2;"></div>
<div style="left:437px;top:3px;width:362px;height:11.6px;background:linear-gradient(#f2f2f2,#d6d6d6);"></div>
<div style="left:437px;top:14.4px;width:362px;height:0.7px;background:#a4a4a4;"></div>
<div style="left:799px;top:3px;width:1px;height:12px;background:#c8c8c8;"></div>
<div style="left:441.35px;top:5.6px;width:6.8px;height:6.8px;border-radius:50%;background:#fc5b57;box-shadow:inset 0 0 0 0.5px #e0443e"></div>
<div style="left:452.20000000000005px;top:5.6px;width:6.8px;height:6.8px;border-radius:50%;background:#fdbc40;box-shadow:inset 0 0 0 0.5px #dea032"></div>
<div style="left:463.5px;top:5.6px;width:6.8px;height:6.8px;border-radius:50%;background:#d6d6d6;box-shadow:inset 0 0 0 0.5px #c4c4c4"></div>
<span class="t" style="left:579.80px;top:4.00px;font-size:8.3px;line-height:9.96px;color:#2c2c2c;-webkit-text-stroke:0.12px #2c2c2c;transform:scaleX(0.895);">5554:Nexus_4_API_22</span>
<div style="left:787.6px;top:0px;width:4.4px;height:1.6px;background:#e8e8e8;border-radius:0 0 2px 2px;"></div>
<div style="left:793.2px;top:0px;width:2px;height:1.4px;background:#f4f4f4;"></div>
<svg style="left:437px;top:14px;" width="363" height="593" viewBox="437 14 363 593"><defs>
<linearGradient id="rimv" x1="0" y1="15" x2="0" y2="118" gradientUnits="userSpaceOnUse">
 <stop offset="0" stop-color="#cdcdcd" stop-opacity="1"/><stop offset="0.3" stop-color="#c2c2c2" stop-opacity="0.9"/><stop offset="0.62" stop-color="#8a8a8a" stop-opacity="0.55"/><stop offset="1" stop-color="#5a5a5a" stop-opacity="0"/></linearGradient>
<linearGradient id="rimv2" x1="0" y1="15" x2="0" y2="92" gradientUnits="userSpaceOnUse">
 <stop offset="0" stop-color="#5c5c5c" stop-opacity="0.95"/><stop offset="0.5" stop-color="#686868" stop-opacity="0.7"/><stop offset="1" stop-color="#3a3a3a" stop-opacity="0"/></linearGradient>
<linearGradient id="rimh" x1="456" y1="0" x2="780" y2="0" gradientUnits="userSpaceOnUse">
 <stop offset="0" stop-color="#fff" stop-opacity="1"/><stop offset="0.75" stop-color="#fff" stop-opacity="1"/><stop offset="0.97" stop-color="#fff" stop-opacity="0.45"/><stop offset="1" stop-color="#fff" stop-opacity="0.4"/></linearGradient>
<linearGradient id="dkv" x1="0" y1="15" x2="0" y2="80" gradientUnits="userSpaceOnUse">
 <stop offset="0" stop-color="#161616" stop-opacity="1"/><stop offset="0.35" stop-color="#1c1c1c" stop-opacity="0.9"/><stop offset="1" stop-color="#2a2a2a" stop-opacity="0"/></linearGradient>
<linearGradient id="rbz" x1="0" y1="50" x2="0" y2="150" gradientUnits="userSpaceOnUse"><stop offset="0" stop-color="#0e0e0e" stop-opacity="0"/><stop offset="1" stop-color="#0e0e0e" stop-opacity="1"/></linearGradient>
<mask id="rm"><rect x="437" y="0" width="363" height="620" fill="url(#rimh)"/></mask>
<linearGradient id="facev" x1="0" y1="20" x2="0" y2="90" gradientUnits="userSpaceOnUse">
 <stop offset="0" stop-color="#1e1e1e"/><stop offset="1" stop-color="#1a1a1a"/></linearGradient>
<linearGradient id="both" x1="472" y1="0" x2="763" y2="0" gradientUnits="userSpaceOnUse">
 <stop offset="0" stop-color="#292929"/><stop offset="0.5" stop-color="#222222"/><stop offset="1" stop-color="#1a1a1a"/></linearGradient>
<clipPath id="pc"><path d="M461.60,612.00C458.40,602.00 456.60,594.00 456.60,585.00L456.60,82.00C456.60,50.00 468.00,29.60 500.00,23.40C535.00,17.60 580.00,14.90 618.10,14.90C656.20,14.90 701.20,17.60 736.20,23.40C768.20,29.60 779.40,50.00 779.40,82.00L779.40,584.00C779.40,594.00 778.00,602.00 775.40,612.00Z"/></clipPath>
<pattern id="mesh" width="1.6" height="1.6" patternUnits="userSpaceOnUse"><rect width="1.6" height="1.6" fill="#2b2b2b"/><circle cx="0.8" cy="0.8" r="0.5" fill="#444"/></pattern>
</defs><path d="M461.60,612.00C458.40,602.00 456.60,594.00 456.60,585.00L456.60,82.00C456.60,50.00 468.00,29.60 500.00,23.40C535.00,17.60 580.00,14.90 618.10,14.90C656.20,14.90 701.20,17.60 736.20,23.40C768.20,29.60 779.40,50.00 779.40,82.00L779.40,584.00C779.40,594.00 778.00,602.00 775.40,612.00Z" fill="#2a2a2a"/><path d="M462.57,612.00C459.39,602.00 457.60,594.00 457.60,585.00L457.60,82.41C457.60,50.46 468.93,30.09 500.73,23.90C535.52,18.11 580.24,15.41 618.10,15.41C656.15,15.41 701.09,18.11 736.04,23.90C768.00,30.09 779.18,50.46 779.18,82.41L779.18,584.00C779.18,594.00 777.78,602.00 775.19,612.00Z" fill="#2c2c2c"/><path d="M463.44,612.00C460.28,602.00 458.50,594.00 458.50,585.00L458.50,82.77C458.50,50.87 469.77,30.53 501.39,24.35C535.98,18.57 580.45,15.88 618.10,15.88C656.10,15.88 700.99,18.57 735.90,24.35C767.81,30.53 778.99,50.87 778.99,82.77L778.99,584.00C778.99,594.00 777.59,602.00 775.00,612.00Z" fill="#4c4c4c"/><path d="M464.22,612.00C461.07,602.00 459.30,594.00 459.30,585.00L459.30,83.09C459.30,51.23 470.51,30.92 501.98,24.75C536.39,18.98 580.64,16.29 618.10,16.29C656.06,16.29 700.90,18.98 735.77,24.75C767.65,30.92 778.81,51.23 778.81,83.09L778.81,584.00C778.81,594.00 777.42,602.00 774.83,612.00Z" fill="#303030"/><path d="M465.87,612.00C462.76,602.00 461.01,594.00 461.01,585.00L461.01,83.78C461.01,52.01 472.09,31.76 503.22,25.60C537.27,19.84 581.04,17.16 618.10,17.16C655.97,17.16 700.71,19.84 735.50,25.60C767.31,31.76 778.44,52.01 778.44,83.78L778.44,584.00C778.44,594.00 777.05,602.00 774.46,612.00Z" fill="#393939"/><path d="M467.42,612.00C464.34,602.00 462.61,594.00 462.61,585.00L462.61,84.43C462.61,52.74 473.58,32.54 504.39,26.40C538.09,20.66 581.42,17.99 618.10,17.99C655.89,17.99 700.53,20.66 735.24,26.40C766.98,32.54 778.09,52.74 778.09,84.43L778.09,584.00C778.09,594.00 776.70,602.00 774.12,612.00Z" fill="#454545"/><path d="M468.97,612.00C465.92,602.00 464.21,594.00 464.21,585.00L464.21,85.08C464.21,53.48 475.07,33.33 505.56,27.21C538.92,21.48 581.80,18.81 618.10,18.81C655.81,18.81 700.35,21.48 734.99,27.21C766.66,33.33 777.74,53.48 777.74,85.08L777.74,584.00C777.74,594.00 776.36,602.00 773.78,612.00Z" fill="#515151"/><path d="M470.72,612.00C467.71,602.00 466.01,594.00 466.01,585.00L466.01,85.81C466.01,54.30 476.75,34.21 506.88,28.11C539.84,22.40 582.22,19.74 618.10,19.74C655.72,19.74 700.14,22.40 734.70,28.11C766.29,34.21 777.35,54.30 777.35,85.81L777.35,584.00C777.35,594.00 775.97,602.00 773.40,612.00Z" fill="#5a5a5a"/><path d="M472.47,612.00C469.49,602.00 467.81,594.00 467.81,585.00L467.81,86.54C467.81,55.12 478.42,35.09 508.20,29.01C540.77,23.31 582.65,20.66 618.10,20.66C655.62,20.66 699.94,23.31 734.41,29.01C765.93,35.09 776.96,55.12 776.96,86.54L776.96,584.00C776.96,594.00 775.58,602.00 773.02,612.00Z" fill="#525252"/><path d="M473.63,612.00C470.68,602.00 469.02,594.00 469.02,585.00L469.02,87.02C469.02,55.67 479.54,35.68 509.08,29.61C541.39,23.93 582.93,21.28 618.10,21.28C655.56,21.28 699.81,23.93 734.22,29.61C765.69,35.68 776.70,55.67 776.70,87.02L776.70,584.00C776.70,594.00 775.32,602.00 772.76,612.00Z" fill="#3e3e3e"/><path d="M474.60,612.00C471.67,602.00 470.02,594.00 470.02,585.00L470.02,87.43C470.02,56.13 480.47,36.17 509.81,30.11C541.90,24.44 583.17,21.80 618.10,21.80C655.51,21.80 699.70,24.44 734.06,30.11C765.48,36.17 776.48,56.13 776.48,87.43L776.48,584.00C776.48,594.00 775.10,602.00 772.55,612.00Z" fill="#2a2a2a"/><path d="M475.57,612.00C472.66,602.00 471.02,594.00 471.02,585.00L471.02,87.83C471.02,56.59 481.40,36.66 510.54,30.61C542.42,24.95 583.40,22.31 618.10,22.31C655.46,22.31 699.58,24.95 733.90,30.61C765.28,36.66 776.26,56.59 776.26,87.83L776.26,584.00C776.26,594.00 774.89,602.00 772.34,612.00Z" fill="#1c1c1c"/><g clip-path="url(#pc)"><rect x="775.8" y="70" width="4" height="540" fill="#606060"/><rect x="775.4" y="70" width="0.8" height="540" fill="#3a3a3a"/></g><path d="M462.18,612.00C458.99,602.00 457.20,594.00 457.20,585.00L457.20,82.55C457.20,50.62 468.56,30.27 500.44,24.08C535.31,18.30 580.14,15.60 618.10,15.60C656.06,15.60 700.89,18.30 735.76,24.08C767.64,30.27 778.80,50.62 778.80,82.55L778.80,584.00C778.80,594.00 777.41,602.00 774.81,612.00" fill="none" stroke="url(#dkv)" stroke-width="1.4"/><path d="M465.38,612.00C462.26,602.00 460.50,594.00 460.50,585.00L460.50,86.19C460.50,54.73 471.63,34.67 502.86,28.58C537.01,22.87 580.92,20.22 618.10,20.22C655.63,20.22 699.96,22.87 734.44,28.58C765.97,34.67 777.00,54.73 777.00,86.19L777.00,584.00C777.00,594.00 775.62,602.00 773.06,612.00" fill="none" stroke="url(#dkv)" stroke-width="2.6"/><g mask="url(#rm)"><path d="M463.54,612.00C460.38,602.00 458.60,594.00 458.60,585.00L458.60,84.13C458.60,52.41 469.86,32.18 501.46,26.04C536.03,20.29 580.47,17.61 618.10,17.61C655.73,17.61 700.17,20.29 734.74,26.04C766.34,32.18 777.40,52.41 777.40,84.13L777.40,584.00C777.40,594.00 776.02,602.00 773.45,612.00" fill="none" stroke="url(#rimv)" stroke-width="2.2"/><path d="M467.03,612.00C463.94,602.00 462.21,594.00 462.21,585.00L462.21,87.61C462.21,56.33 473.21,36.39 504.10,30.33C537.89,24.66 581.32,22.02 618.10,22.02C655.49,22.02 699.65,24.66 734.00,30.33C765.41,36.39 776.40,56.33 776.40,87.61L776.40,584.00C776.40,594.00 775.03,602.00 772.47,612.00" fill="none" stroke="url(#rimv2)" stroke-width="1.5"/></g><path d="M457.6,588C457.8,596 459.4,603 462.4,611" fill="none" stroke="#8a8a8a" stroke-width="0.8" opacity="0.7"/><path d="M777.2,590C776.8,598 775.4,604 773,611" fill="none" stroke="#b0b0b0" stroke-width="0.9" opacity="0.8"/><path d="M476.74,612.00C473.85,602.00 472.22,594.00 472.22,585.00L472.22,88.40C472.22,57.22 482.52,37.35 511.42,31.31C543.04,25.66 583.68,23.03 618.10,23.03C655.35,23.03 699.35,25.66 733.56,31.31C764.85,37.35 775.80,57.22 775.80,88.40L775.80,584.00C775.80,594.00 774.43,602.00 771.89,612.00Z" fill="url(#facev)"/><rect x="762.6" y="50" width="13" height="520" fill="url(#rbz)"/><g clip-path="url(#pc)"><rect x="470" y="569.4" width="306" height="42" fill="url(#both)"/></g><path d="M579.6,21.3h77l-3.6,3.4q-1.2,1.1 -2.8,1.1h-64.2q-1.6,0 -2.8,-1.1z" fill="#505050"/><path d="M584.6,25.7h66l-2.2,4.6q-0.6,1.2 -2,1.2h-57.6q-1.4,0 -2,-1.2z" fill="url(#mesh)"/><circle cx="493.75" cy="45.75" r="3.9" fill="#272727"/><circle cx="505" cy="45.75" r="3.9" fill="#272727"/><circle cx="732.5" cy="45.75" r="5" fill="#25252a"/><circle cx="732.5" cy="45.75" r="3.3" fill="#16161b"/><circle cx="732.5" cy="45.75" r="1" fill="#2a3a8a"/></svg>
<div style="left:799px;top:582.6px;width:1px;height:25px;background:#f0f0f0;"></div>
<div style="left:472.3px;top:85.5px;width:290.40000000000003px;height:483.7px;background:#eeeeee;"></div>
<div style="left:472.1px;top:146.3px;width:1.3px;height:387px;background:#f9f9f9;"></div>
<div style="left:472.3px;top:85.5px;width:290.40000000000003px;height:18.5px;background:#303f9f;"></div>
<div style="left:472.3px;top:104px;width:290.40000000000003px;height:42.3px;background:#3f51b5;"></div>
<div style="left:472.3px;top:146.3px;width:290.40000000000003px;height:3px;background:linear-gradient(rgba(0,0,0,0.16),rgba(0,0,0,0))"></div>
<div style="left:472.3px;top:533.25px;width:290.40000000000003px;height:36px;background:#000;"></div>
<svg style="left:706.4px;top:89.8px;" width="11.2" height="11.4" viewBox="0 0 11.2 11.4"><path d="M10.4,1V10.6H0.9z" fill="#ffffff" fill-opacity="0.1" stroke="#ffffff" stroke-opacity="0.34" stroke-width="0.9"/></svg>
<svg style="left:722.4px;top:89.2px;" width="8.8" height="11.6" viewBox="0 0 8.8 11.6"><path d="M2.9,0.4h3v1.3h2.1v9.6h-7.2v-9.6h2.1z" fill="#fff" fill-opacity="0.45"/><path d="M0.8,5.6h7.2v5.7h-7.2z" fill="#fff"/><path d="M5.2,2.6L2.9,6.6h1.5l-0.7,3.2l2.5,-4.2h-1.6z" fill="#303f9f"/></svg>
<span class="t" style="left:735.80px;top:90.00px;font-size:9.9px;line-height:11.88px;color:#fff;font-weight:bold;transform:scaleX(0.992);">2:01</span>
<span class="t" style="left:484.50px;top:118.00px;font-size:15.3px;line-height:18.36px;color:#fff;font-weight:bold;transform:scaleX(0.937);-webkit-text-stroke:0.35px #3f51b5;">Donation.1.0</span>
<div style="left:744.5px;top:119.5px;width:3px;height:3px;border-radius:50%;background:#fff"></div>
<div style="left:744.5px;top:124.3px;width:3px;height:3px;border-radius:50%;background:#fff"></div>
<div style="left:744.5px;top:129.0px;width:3px;height:3px;border-radius:50%;background:#fff"></div>
<span class="t" style="left:484.30px;top:162.00px;font-size:17.1px;line-height:20.52px;color:#1c1c1c;transform:scaleX(0.966);-webkit-text-stroke:0.2px #1c1c1c;">Welcome Homer</span>
<span class="t" style="left:484.30px;top:204.00px;font-size:13.5px;line-height:16.20px;color:#7a7a7a;transform:scaleX(0.980);-webkit-text-stroke:0.15px #7a7a7a;">Please Give Generously</span>
<svg style="left:487.25px;top:223px;" width="18" height="18" viewBox="0 0 18 18"><circle cx="9" cy="9" r="6.9" fill="#f1f1f1" stroke="#505050" stroke-width="1.7"/></svg>
<svg style="left:487.25px;top:247.5px;" width="18" height="18" viewBox="0 0 18 18"><circle cx="9" cy="9" r="6.9" fill="#f1f1f1" stroke="#505050" stroke-width="1.7"/></svg>
<span class="t" style="left:508.80px;top:227.00px;font-size:10.9px;line-height:13.08px;color:#1c1c1c;-webkit-text-stroke:0.4px #1c1c1c;transform:scaleX(0.927);">PayPal</span>
<span class="t" style="left:508.80px;top:251.00px;font-size:10.9px;line-height:13.08px;color:#1c1c1c;-webkit-text-stroke:0.4px #1c1c1c;transform:scaleX(0.938);">Direct</span>
<span class="t" style="left:715.50px;top:236.00px;font-size:13.6px;line-height:16.32px;color:#959595;transform:scaleX(0.961);">989</span>
<div style="left:702px;top:268.6px;width:48.5px;height:1.8px;background:#40b5e5;"></div>
<span class="t" style="left:715.20px;top:281.00px;font-size:13.6px;line-height:16.32px;color:#141414;transform:scaleX(0.979);-webkit-text-stroke:0.2px #141414;">990</span>
<div style="left:702px;top:306.4px;width:48.5px;height:1.8px;background:#40b5e5;"></div>
<span class="t" style="left:715.50px;top:327.00px;font-size:13.6px;line-height:16.32px;color:#959595;transform:scaleX(0.961);">991</span>
<div style="left:484.3px;top:442.4px;width:266.3px;height:1.8px;background:#c9c9c9;"></div>
<div style="left:586.75px;top:453.75px;width:61.25px;height:28.2px;border-radius:1.6px;background:#d6d7d7;box-shadow:0 0.8px 1.2px rgba(0,0,0,0.28)"></div>
<span class="t" style="left:597.80px;top:462.00px;font-size:10.9px;line-height:13.08px;color:#1c1c1c;font-weight:bold;transform:scaleX(0.885);">DONATE</span>
<div style="left:708.25px;top:479px;width:42px;height:42px;border-radius:50%;background:#ff4081;box-shadow:0 2.4px 3.6px rgba(0,0,0,0.3),0 0.6px 1.2px rgba(0,0,0,0.2)"></div>
<svg style="left:720px;top:493.75px;" width="18.75" height="13.25" viewBox="0 0 18.75 13.25"><rect x="0" y="0" width="18.75" height="13.25" rx="0.8" fill="#fff"/><path d="M1.2,1.2L9.4,7.8L17.6,1.2" fill="none" stroke="#ff4081" stroke-width="1.5"/><path d="M1.2,12.4L6.6,6.4M17.6,12.4L12.2,6.4" stroke="#ff4081" stroke-width="1.2"/></svg>
<svg style="left:523px;top:542px;" width="20" height="19" viewBox="0 0 20 19"><path d="M15.4,3.2L3.2,9.5L15.4,15.8z" fill="none" stroke="#fff" stroke-width="1.7" stroke-linejoin="round"/></svg>
<svg style="left:609px;top:543px;" width="17" height="17" viewBox="0 0 17 17"><circle cx="8.5" cy="8.3" r="6" fill="none" stroke="#fff" stroke-width="1.7"/></svg>
<svg style="left:694px;top:543px;" width="17" height="17" viewBox="0 0 17 17"><rect x="3.1" y="3.3" width="10.4" height="10.4" rx="0.8" fill="none" stroke="#fff" stroke-width="1.7"/></svg>
</div></body></html>
